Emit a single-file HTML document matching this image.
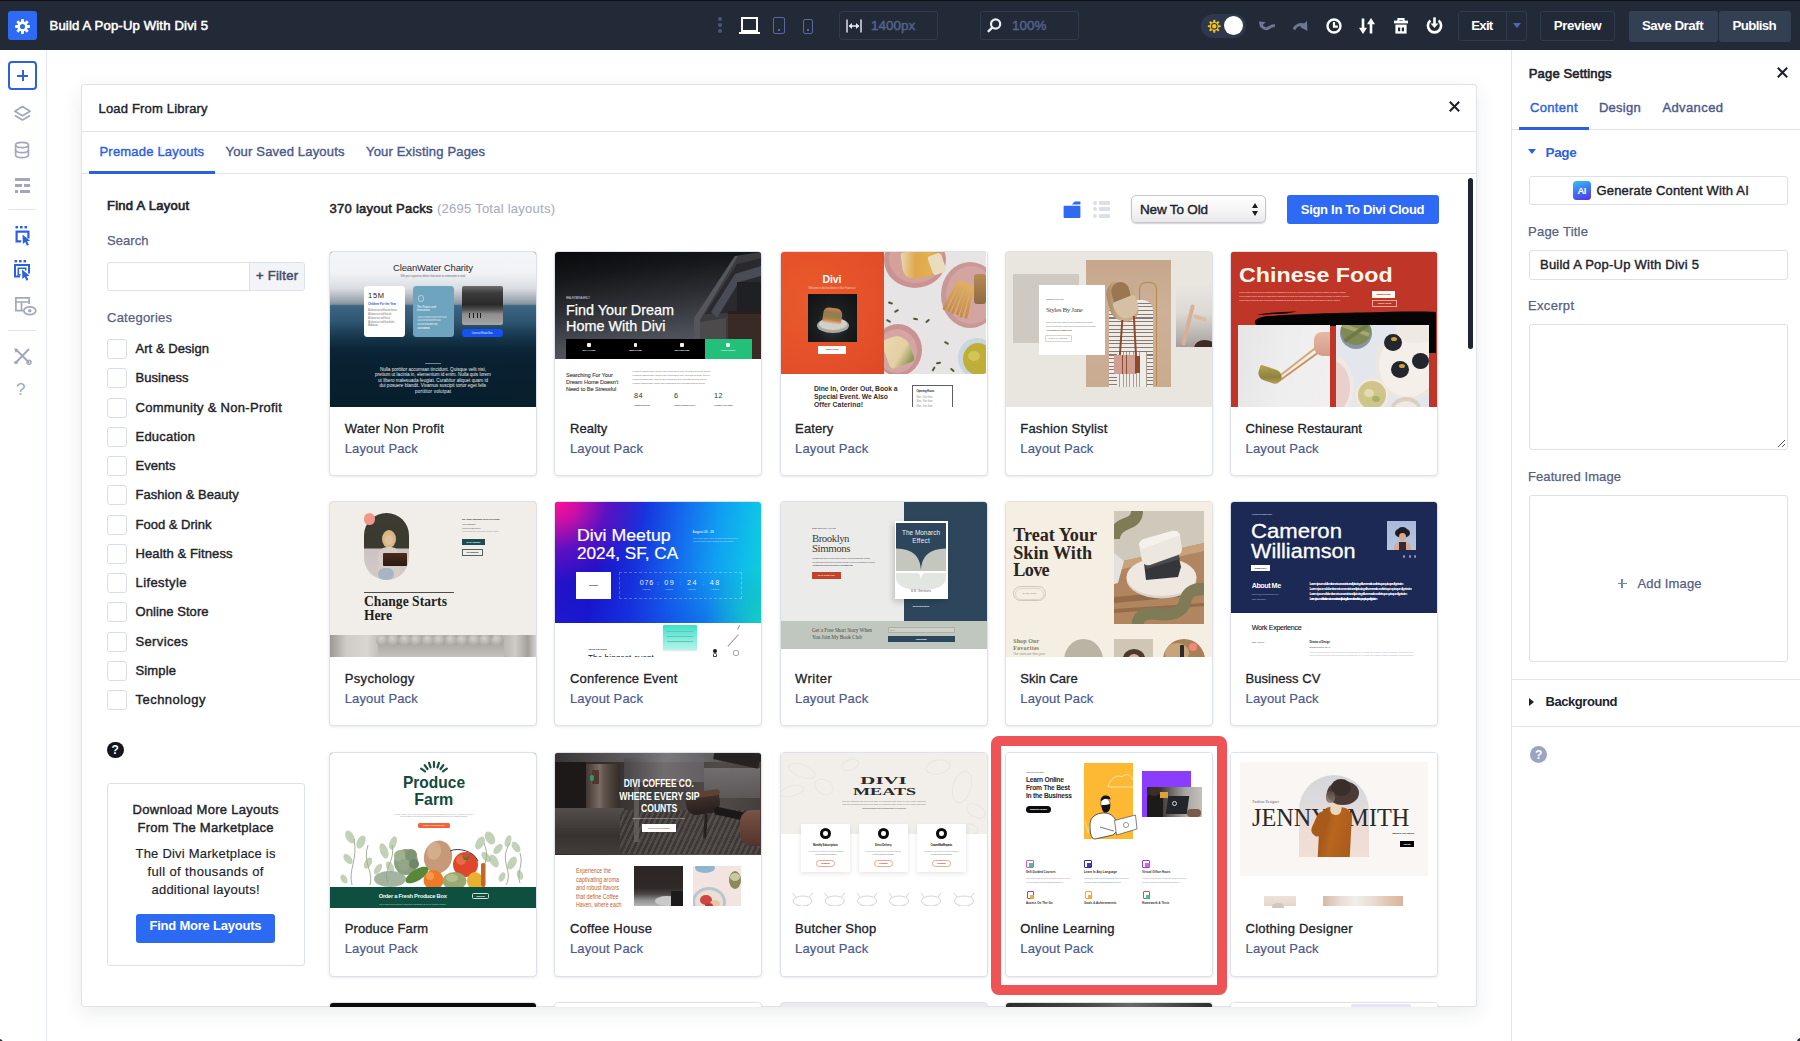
<!DOCTYPE html>
<html lang="en">
<head>
<meta charset="utf-8">
<title>Build A Pop-Up With Divi 5</title>
<style>
*{box-sizing:border-box;margin:0;padding:0}
html,body{width:1800px;height:1041px;overflow:hidden;background:#fff}
body{font-family:"Liberation Sans",sans-serif;font-size:13px;color:#20232b;position:relative;-webkit-font-smoothing:antialiased}
.abs{position:absolute}
.t{position:absolute;white-space:nowrap;line-height:16px;font-size:13px;letter-spacing:.25px;-webkit-text-stroke:.4px currentColor}
/* top bar */
#top{position:absolute;left:0;top:0;width:1800px;height:50px;background:#222a38;border-top:1px solid #0d1017}
#top .t{color:#fff;letter-spacing:0}
.tb{position:absolute;border:1px solid #303b4f;border-radius:3px}
/* sidebar */
#side{position:absolute;left:0;top:50px;width:47px;height:991px;background:#fff;border-right:1px solid #e3e6ec}
/* modal */
#modal{position:absolute;left:81px;top:84px;width:1396px;height:923px;background:#fff;border:1px solid #dfe2e8;border-radius:3px;box-shadow:0 6px 20px rgba(30,40,60,.09);overflow:hidden}
/* right panel */
#right{position:absolute;left:1511px;top:50px;width:289px;height:991px;background:#fff;border-left:1px solid #e1e4ea}
.card{position:absolute;width:208px;height:225px;background:#fff;border:1px solid #dde1e8;border-radius:4px;box-shadow:0 1px 3px rgba(30,40,60,.10);overflow:hidden}
.card .img{position:absolute;left:0;top:0;width:206px;height:155px;overflow:hidden}
.card .n{position:absolute;left:14.5px;top:168.8px;font-size:13px;line-height:16px;letter-spacing:.3px;color:#20232b;white-space:nowrap;-webkit-text-stroke:.3px currentColor}
.card .s{position:absolute;left:14.5px;top:188.8px;font-size:13px;line-height:16px;letter-spacing:.3px;color:#4c5a8c;white-space:nowrap;-webkit-text-stroke:.2px currentColor}
.m{position:absolute;white-space:nowrap}
.cb{position:absolute;left:107px;width:20px;height:20px;border:1px solid #d9dde5;border-radius:3px;background:#fff}
.cl{position:absolute;left:135px;font-size:13px;line-height:16px;letter-spacing:.3px;color:#20232b;white-space:nowrap;-webkit-text-stroke:.4px currentColor}
</style>
</head>
<body>
<!--TOP-->
<div id="top">
<div class="abs" style="left:8px;top:10px;width:29px;height:29px;background:#2f6af5;border-radius:3px"></div>
<svg class="abs" style="left:14px;top:16.500px" width="17" height="17" viewBox="0 0 24 24"><g fill="#fff"><circle cx="12" cy="12" r="7.2"/><g id="tt"><rect x="10" y="1.5" width="4" height="21" rx="1"/></g><rect x="10" y="1.5" width="4" height="21" rx="1" transform="rotate(45 12 12)"/><rect x="10" y="1.5" width="4" height="21" rx="1" transform="rotate(90 12 12)"/><rect x="10" y="1.5" width="4" height="21" rx="1" transform="rotate(135 12 12)"/></g><circle cx="12" cy="12" r="3.6" fill="#2f6af5"/></svg>
<div class="t" style="left:49.5px;top:17.0px;font-size:13.1px;letter-spacing:0.17px;color:#fff;-webkit-text-stroke:0.55px currentColor;">Build A Pop-Up With Divi 5</div>
<!-- dots -->
<div class="abs" style="left:718px;top:16px;width:4px;height:4px;border-radius:2px;background:#4c587a"></div>
<div class="abs" style="left:718px;top:22px;width:4px;height:4px;border-radius:2px;background:#4c587a"></div>
<div class="abs" style="left:718px;top:28px;width:4px;height:4px;border-radius:2px;background:#4c587a"></div>
<!-- desktop -->
<div class="abs" style="left:741px;top:16px;width:17px;height:15px;border:2px solid #fff"></div>
<div class="abs" style="left:739px;top:31px;width:21px;height:2px;background:#fff"></div>
<!-- tablet -->
<div class="abs" style="left:773px;top:16px;width:12px;height:17px;border:1.6px solid #5a6aa0;border-radius:2px"></div>
<div class="abs" style="left:778px;top:28px;width:2px;height:2px;background:#5a6aa0"></div>
<!-- phone -->
<div class="abs" style="left:803px;top:18px;width:10px;height:15px;border:1.6px solid #5a6aa0;border-radius:2px"></div>
<div class="abs" style="left:807px;top:28px;width:2px;height:2px;background:#5a6aa0"></div>
<!-- width box -->
<div class="tb" style="left:839px;top:10px;width:99px;height:29px"></div>
<svg class="abs" style="left:846px;top:17px" width="16" height="16" viewBox="0 0 16 16"><g stroke="#e8ecf5" stroke-width="1.4" fill="none"><path d="M1 1.5v13M15 1.5v13M3.5 8h9"/></g><path d="M2.6 8l3.4-3v6zM13.4 8l-3.4-3v6z" fill="#e8ecf5"/></svg>
<div class="t" style="left:871px;top:16.500px;color:#56648f;font-size:13.5px">1400px</div>
<!-- zoom box -->
<div class="tb" style="left:980px;top:10px;width:99px;height:29px"></div>
<svg class="abs" style="left:986px;top:16px" width="17" height="17" viewBox="0 0 17 17"><circle cx="9.6" cy="7" r="4.6" fill="none" stroke="#e8ecf5" stroke-width="2.2"/><path d="M6.2 10.6L2.6 14.2" stroke="#e8ecf5" stroke-width="2.4" stroke-linecap="round"/></svg>
<div class="t" style="left:1012px;top:16.500px;color:#56648f;font-size:13.5px">100%</div>
<!-- toggle -->
<div class="abs" style="left:1201px;top:13px;width:45px;height:24px;border-radius:12px;background:#2d384e"></div>
<svg class="abs" style="left:1206.500px;top:17.500px" width="14.500" height="14.500" viewBox="0 0 17 17"><g fill="#f2c21d"><circle cx="8.5" cy="8.5" r="5.2"/><g><rect x="7.3" y="1" width="2.4" height="15" rx=".6"/><rect x="7.3" y="1" width="2.4" height="15" rx=".6" transform="rotate(45 8.5 8.5)"/><rect x="7.3" y="1" width="2.4" height="15" rx=".6" transform="rotate(90 8.5 8.5)"/><rect x="7.3" y="1" width="2.4" height="15" rx=".6" transform="rotate(135 8.5 8.5)"/></g></g><circle cx="8.5" cy="8.5" r="3.3" fill="none" stroke="#2f394d" stroke-width="1.3"/></svg>
<div class="abs" style="left:1224px;top:15px;width:19px;height:19px;border-radius:10px;background:#fff"></div>
<!-- undo / redo -->
<svg class="abs" style="left:1257px;top:16.500px" width="20" height="18" viewBox="0 0 20 18"><path d="M4 6.500c1.800 4.400 5 5 7.600 3.400 2.200-1.400 3.600-2.600 6.400-2" fill="none" stroke="#6c7791" stroke-width="3"/><path d="M1.800 3.600l7 .4-5.600 5.600z" fill="#6c7791"/></svg>
<svg class="abs" style="left:1291px;top:16px" width="20" height="18" viewBox="0 0 20 18"><path d="M3 12.600c1.600-4.400 5.800-6.200 11.400-4.400" fill="none" stroke="#6c7791" stroke-width="3"/><path d="M13.400 3.600l5 8.600h-8.200z" fill="#6c7791" transform="rotate(28 14 9)"/></svg>
<!-- clock -->
<svg class="abs" style="left:1325px;top:16px" width="18" height="18" viewBox="0 0 18 18"><circle cx="9" cy="9" r="6.500" fill="none" stroke="#fff" stroke-width="2.400"/><path d="M9 5V9.600H12.800" fill="none" stroke="#fff" stroke-width="2.200"/></svg>
<!-- up/down arrows -->
<svg class="abs" style="left:1358px;top:16px" width="18" height="18" viewBox="0 0 18 18"><g stroke="#fff" stroke-width="2.600" fill="none"><path d="M5 1.400v11M13 16.600V6"/></g><path d="M1 10.800h8L5 17zM9 7.200h8L13 1z" fill="#fff"/></svg>
<!-- trash -->
<svg class="abs" style="left:1392px;top:16px" width="18" height="18" viewBox="0 0 18 18"><path d="M2 5h14" stroke="#fff" stroke-width="2.800" fill="none"/><path d="M6.400 4V2h5.200V4" stroke="#fff" stroke-width="2" fill="none"/><path d="M3.400 7.600h11.200v9H3.400z" fill="#fff"/><path d="M6 10.400h2.200v3.800H6zM9.800 10.400H12v3.800H9.800z" fill="#222a38"/></svg>
<!-- power -->
<svg class="abs" style="left:1425px;top:15px" width="19" height="19" viewBox="0 0 19 19"><path d="M5.400 4.600A6.600 6.600 0 1 0 13.600 4.600" fill="none" stroke="#fff" stroke-width="2.600"/><path d="M9.500 1.400v6.600" stroke="#fff" stroke-width="2.600"/><path d="M5.600 7.400h7.800L9.500 12z" fill="#fff"/></svg>
<!-- Exit -->
<div class="tb" style="left:1458px;top:10px;width:69px;height:30px"></div>
<div class="abs" style="left:1506px;top:11px;width:1px;height:28px;background:#303b4f"></div>
<div class="t" style="left:1471.3px;top:17.3px;font-size:13.3px;letter-spacing:-0.80px;color:#fff;font-weight:bold;-webkit-text-stroke:0;">Exit</div>
<div class="abs" style="left:1513px;top:22px;width:0;height:0;border-left:4px solid transparent;border-right:4px solid transparent;border-top:5px solid #5566b8"></div>
<!-- Preview -->
<div class="tb" style="left:1540px;top:10px;width:75px;height:30px"></div>
<div class="t" style="left:1553.7px;top:17.3px;font-size:13.3px;letter-spacing:-0.40px;color:#fff;font-weight:bold;-webkit-text-stroke:0;">Preview</div>
<!-- Save Draft / Publish -->
<div class="abs" style="left:1628.500px;top:10px;width:89px;height:30.500px;background:#334054;border-radius:3px"></div>
<div class="abs" style="left:1719px;top:10px;width:71.500px;height:30.500px;background:#334054;border-radius:3px"></div>
<div class="t" style="left:1641.9px;top:17.3px;font-size:13.3px;letter-spacing:-0.45px;color:#fff;font-weight:bold;-webkit-text-stroke:0;">Save Draft</div>
<div class="t" style="left:1732.6px;top:17.3px;font-size:13.3px;letter-spacing:-0.67px;color:#fff;font-weight:bold;-webkit-text-stroke:0;">Publish</div>
</div>
<!--SIDE-->
<div id="side">
<div class="abs" style="left:8px;top:11px;width:29px;height:29px;border:2px solid #2c60e4;border-radius:4px"></div>
<div class="abs" style="left:17px;top:24.5px;width:11px;height:2px;background:#2c60e4"></div>
<div class="abs" style="left:21.5px;top:20px;width:2px;height:11px;background:#2c60e4"></div>
<!-- layers -->
<svg class="abs" style="left:12px;top:54px" width="21" height="21" viewBox="0 0 21 21"><g fill="none" stroke="#a3a7bd" stroke-width="1.7" stroke-linejoin="round"><path d="M10.5 2.6l7.6 4.6-7.6 4.6-7.6-4.600z"/><path d="M2.9 11.4l7.600 4.600 7.600-4.600"/></g></svg>
<!-- database -->
<svg class="abs" style="left:13px;top:91px" width="18" height="18" viewBox="0 0 18 18"><g fill="none" stroke="#a3a7bd" stroke-width="1.7"><ellipse cx="9" cy="4" rx="6.400" ry="2.600"/><path d="M2.600 4v10c0 1.500 2.900 2.600 6.400 2.600s6.400-1.100 6.400-2.600V4"/><path d="M2.600 9c0 1.500 2.900 2.600 6.400 2.600s6.400-1.100 6.400-2.600"/></g></svg>
<!-- list -->
<div class="abs" style="left:15px;top:128px;width:15px;height:3px;background:#a3a7bd"></div>
<div class="abs" style="left:15px;top:134px;width:7px;height:3px;background:#a3a7bd"></div>
<div class="abs" style="left:24px;top:134px;width:6px;height:3px;background:#a3a7bd"></div>
<div class="abs" style="left:15px;top:140px;width:3px;height:3px;background:#a3a7bd"></div>
<div class="abs" style="left:20px;top:140px;width:10px;height:3px;background:#a3a7bd"></div>
<div class="abs" style="left:8px;top:159px;width:28px;height:1px;background:#e1e4ea"></div>
<!-- cursor select 1 -->
<svg class="abs" style="left:13px;top:175px" width="20" height="23" viewBox="0 0 20 23"><g fill="#2c60e4"><rect x="2.500" y="1" width="2.600" height="2.400"/><rect x="7" y="1" width="2.600" height="2.400"/><rect x="11.500" y="1" width="2.600" height="2.400"/><path d="M2.500 5.500h14v8h-2.200V7.700H4.700v7.600h3.500v2.200H2.500z"/><path d="M9.500 9.500l7.600 6.200-3 .5 1.800 3.600-1.900.9-1.800-3.700-2.300 2z"/></g></svg>
<!-- cursor select 2 -->
<svg class="abs" style="left:12px;top:209px" width="21" height="23" viewBox="0 0 21 23"><g fill="#2c60e4"><rect x="2.500" y="1" width="2.600" height="2.400"/><rect x="7" y="1" width="2.600" height="2.400"/><rect x="11.500" y="1" width="2.600" height="2.400"/><path d="M2 5h16v9.500h-2V7H4v9.500h4v2H2z"/><path d="M5.500 8.500h9v3h-1.600v-1.400H7.100v5H8.500v1.600h-3z"/><path d="M10 10.500l7.600 6.200-3 .5 1.800 3.600-1.900.9-1.800-3.700-2.300 2z"/></g></svg>
<!-- table eye -->
<svg class="abs" style="left:14px;top:246px" width="24" height="22" viewBox="0 0 24 22"><g fill="none" stroke="#a3a7bd" stroke-width="1.700"><path d="M9 14.600H1.900V1.900h13.200v6"/><path d="M1.900 6h13.200M7.500 6v8.600"/><ellipse cx="15.800" cy="14.800" rx="6" ry="3.900" fill="#fff"/></g><circle cx="15.800" cy="14.800" r="1.800" fill="#a3a7bd"/></svg>
<div class="abs" style="left:8px;top:280px;width:28px;height:1px;background:#e1e4ea"></div>
<!-- tools -->
<svg class="abs" style="left:13px;top:297px" width="19" height="18" viewBox="0 0 19 18"><g stroke="#a3a7bd" stroke-width="2" stroke-linecap="round" fill="none"><path d="M3 15.500L15.500 2.500"/><path d="M3 2.500L15.500 15"/></g><path d="M1.200 1.200l4 1.400-.6 2.200-2.200.6z" fill="#a3a7bd"/><circle cx="16" cy="15.200" r="2" fill="none" stroke="#a3a7bd" stroke-width="1.500"/><circle cx="3" cy="15.500" r="1.800" fill="#a3a7bd"/></svg>
<div class="t" style="left:16px;top:330px;font-size:17px;line-height:20px;color:#a3a7bd;-webkit-text-stroke:0">?</div>
</div>
<!--MODAL-->
<div id="modal"></div>
<div id="mc" class="abs" style="left:0;top:0;width:1477px;height:1007px;overflow:hidden">
<div class="t" style="left:98.5px;top:100.5px;font-size:13px;letter-spacing:0.18px;">Load From Library</div>
<svg class="abs" style="left:1448px;top:100px" width="13" height="13" viewBox="0 0 13 13"><path d="M1.800 1.800l9.400 9.400M11.200 1.800l-9.400 9.400" stroke="#1d2028" stroke-width="2" fill="none"/></svg>
<div class="abs" style="left:82px;top:131px;width:1394px;height:1px;background:#e1e4ea"></div>
<div class="t" style="left:99.5px;top:143.5px;font-size:13px;letter-spacing:0.19px;color:#2c60e4;">Premade Layouts</div>
<div class="t" style="left:225.5px;top:143.5px;font-size:13px;letter-spacing:0.18px;color:#4c5a8c;">Your Saved Layouts</div>
<div class="t" style="left:366.0px;top:143.5px;font-size:13px;letter-spacing:0.17px;color:#4c5a8c;">Your Existing Pages</div>
<div class="abs" style="left:82px;top:173px;width:1394px;height:1px;background:#e1e4ea"></div>
<div class="abs" style="left:89px;top:171px;width:126px;height:3px;background:#2c60e4"></div>
<div class="t" style="left:107.0px;top:197.5px;font-size:13px;letter-spacing:0.27px;-webkit-text-stroke:0.65px currentColor;">Find A Layout</div>
<div class="t" style="left:107.0px;top:232.5px;font-size:13px;letter-spacing:0.06px;color:#566083;-webkit-text-stroke:0.25px currentColor;">Search</div>
<div class="abs" style="left:107px;top:262px;width:198px;height:29px;border:1px solid #dde0e7;border-radius:3px;background:#fff"></div>
<div class="abs" style="left:249px;top:263px;width:55px;height:27px;border-left:1px solid #dde0e7;background:#f3f4f8;border-radius:0 2px 2px 0"></div>
<div class="t" style="left:256.0px;top:268.3px;font-size:13px;letter-spacing:0.27px;color:#434c6c;-webkit-text-stroke:0.5px currentColor;">+ Filter</div>
<div class="t" style="left:107.0px;top:309.5px;font-size:13px;letter-spacing:0.24px;color:#566083;-webkit-text-stroke:0.25px currentColor;">Categories</div>
<div class="cb" style="top:339.0px"></div>
<div class="t" style="left:135.5px;top:341.0px;font-size:13px;letter-spacing:0.05px;">Art &amp; Design</div>
<div class="cb" style="top:368.3px"></div>
<div class="t" style="left:135.5px;top:370.3px;font-size:13px;letter-spacing:0.04px;">Business</div>
<div class="cb" style="top:397.5px"></div>
<div class="t" style="left:135.5px;top:399.5px;font-size:13px;letter-spacing:0.29px;">Community &amp; Non-Profit</div>
<div class="cb" style="top:426.8px"></div>
<div class="t" style="left:135.5px;top:428.8px;font-size:13px;letter-spacing:0.21px;">Education</div>
<div class="cb" style="top:456.1px"></div>
<div class="t" style="left:135.5px;top:458.1px;font-size:13px;letter-spacing:0.05px;">Events</div>
<div class="cb" style="top:485.4px"></div>
<div class="t" style="left:135.5px;top:487.4px;font-size:13px;letter-spacing:0.04px;">Fashion &amp; Beauty</div>
<div class="cb" style="top:514.6px"></div>
<div class="t" style="left:135.5px;top:516.6px;font-size:13px;letter-spacing:0.01px;">Food &amp; Drink</div>
<div class="cb" style="top:543.9px"></div>
<div class="t" style="left:135.5px;top:545.9px;font-size:13px;letter-spacing:0.11px;">Health &amp; Fitness</div>
<div class="cb" style="top:573.2px"></div>
<div class="t" style="left:135.5px;top:575.2px;font-size:13px;letter-spacing:0.41px;">Lifestyle</div>
<div class="cb" style="top:602.4px"></div>
<div class="t" style="left:135.5px;top:604.4px;font-size:13px;letter-spacing:0.07px;">Online Store</div>
<div class="cb" style="top:631.7px"></div>
<div class="t" style="left:135.5px;top:633.7px;font-size:13px;letter-spacing:0.36px;">Services</div>
<div class="cb" style="top:661.0px"></div>
<div class="t" style="left:135.5px;top:663.0px;font-size:13px;letter-spacing:0.15px;">Simple</div>
<div class="cb" style="top:690.2px"></div>
<div class="t" style="left:135.5px;top:692.2px;font-size:13px;letter-spacing:0.47px;">Technology</div>
<div class="abs" style="left:107px;top:741.5px;width:16.500px;height:16.500px;border-radius:9px;background:#14161c"></div>
<div class="t" style="left:111.5px;top:741.8px;font-size:12px;letter-spacing:0.00px;color:#fff;font-weight:bold;-webkit-text-stroke:0;">?</div>
<div class="abs" style="left:107px;top:783px;width:198px;height:183px;border:1px solid #dde0e7;border-radius:3px"></div>
<div class="t" style="left:132.5px;top:801.5px;font-size:13px;letter-spacing:0.29px;">Download More Layouts</div>
<div class="t" style="left:137.5px;top:819.5px;font-size:13px;letter-spacing:0.29px;">From The Marketplace</div>
<div class="t" style="left:135.5px;top:845.5px;font-size:13px;letter-spacing:0.22px;-webkit-text-stroke:0.15px currentColor;">The Divi Marketplace is</div>
<div class="t" style="left:147.5px;top:863.5px;font-size:13px;letter-spacing:0.36px;-webkit-text-stroke:0.15px currentColor;">full of thousands of</div>
<div class="t" style="left:151.5px;top:881.5px;font-size:13px;letter-spacing:0.22px;-webkit-text-stroke:0.15px currentColor;">additional layouts!</div>
<div class="abs" style="left:136px;top:914px;width:139px;height:29px;border-radius:3px;background:#2c6af3"></div>
<div class="t" style="left:149.5px;top:918.0px;font-size:13px;letter-spacing:-0.22px;color:#fff;font-weight:bold;-webkit-text-stroke:0;">Find More Layouts</div>
<div class="t" style="left:329.5px;top:201.0px;font-size:13px;letter-spacing:0.27px;-webkit-text-stroke:0.55px currentColor;">370 layout Packs</div>
<div class="t" style="left:437.0px;top:201.0px;font-size:13px;letter-spacing:0.25px;color:#a9adc0;-webkit-text-stroke:0.1px currentColor;">(2695 Total layouts)</div>
<svg class="abs" style="left:1062.500px;top:200.500px" width="18" height="18" viewBox="0 0 18 18"><path d="M.6 3.600h8.200l2.800-3h5.800v3H.6z" fill="#2f6af0"/><rect x=".6" y="4.700" width="16.800" height="12.300" rx="1" fill="#2f6af0"/></svg>
<div class="abs" style="left:1092.500px;top:201.0px;width:4px;height:4px;border-radius:2px;background:#dcdfe9"></div>
<div class="abs" style="left:1099px;top:201.0px;width:10.700px;height:4px;border-radius:1px;background:#dcdfe9"></div>
<div class="abs" style="left:1092.500px;top:207.3px;width:4px;height:4px;border-radius:2px;background:#dcdfe9"></div>
<div class="abs" style="left:1099px;top:207.3px;width:10.700px;height:4px;border-radius:1px;background:#dcdfe9"></div>
<div class="abs" style="left:1092.500px;top:213.6px;width:4px;height:4px;border-radius:2px;background:#dcdfe9"></div>
<div class="abs" style="left:1099px;top:213.6px;width:10.700px;height:4px;border-radius:1px;background:#dcdfe9"></div>
<div class="abs" style="left:1130.700px;top:194.800px;width:135px;height:28.700px;border:1px solid #c6c7cc;border-radius:5px;background:linear-gradient(180deg,#fff 0%,#f4f4f5 60%,#e9e9eb 100%);box-shadow:0 1px 1.500px rgba(0,0,0,.18)"></div>
<div class="t" style="left:1140.0px;top:201.7px;font-size:13.5px;letter-spacing:-0.17px;">New To Old</div>
<div class="abs" style="left:1252.400px;top:203px;width:0;height:0;border-left:3.500px solid transparent;border-right:3.500px solid transparent;border-bottom:5px solid #1d1d1f"></div>
<div class="abs" style="left:1252.400px;top:210.500px;width:0;height:0;border-left:3.500px solid transparent;border-right:3.500px solid transparent;border-top:5px solid #1d1d1f"></div>
<div class="abs" style="left:1287px;top:194.800px;width:151.700px;height:29px;border-radius:3px;background:#2f6af5"></div>
<div class="t" style="left:1300.8px;top:201.8px;font-size:13px;letter-spacing:-0.30px;color:#fff;font-weight:bold;-webkit-text-stroke:0;">Sign In To Divi Cloud</div>
<div class="abs" style="left:1468px;top:178px;width:5px;height:171px;border-radius:2.500px;background:#1d2535"></div>
<!--GRIDCARDS-->
<div class="card" style="left:329.2px;top:250.9px"><div class="img" style="background:#071e2d"><div class="abs" style="left:-0.2px;top:-0.1px;width:206px;height:155px"><div class="abs" style="left:-1.0px;top:-1.0px;width:209.0px;height:156.0px;background:linear-gradient(180deg,#f3f5f8 0%,#f1f3f6 14%,#d9dde2 24%,#8e9aa3 33.500%,#7d8d98 34.200%,#3d6684 35%,#2f5672 45%,#17374d 55%,#0b2538 63%,#08202f 75%,#071e2d 100%);"></div><div class="m" style="left:63.0px;top:9.8px;font-size:9.5px;line-height:11.4px;letter-spacing:-0.15px;color:#2b2b2f;">CleanWater Charity</div><div class="m" style="left:70.5px;top:23.4px;font-size:2.6px;line-height:3.1px;letter-spacing:-0.15px;color:#777;">With your support we deliver clean water to communities in need</div><div class="abs" style="left:33.5px;top:34.0px;width:41.5px;height:51.0px;background:#fff;border-radius:3.500px"></div><div class="m" style="left:38.0px;top:39.0px;font-size:7.5px;line-height:9px;letter-spacing:0.71px;color:#222;">15M</div><div class="m" style="left:38.0px;top:51.3px;font-size:2.8px;line-height:3.4px;letter-spacing:-0.01px;color:#2457d6;font-weight:bold;">Children For the Year</div><div class="m" style="left:38.0px;top:57.5px;font-size:2.6px;line-height:3.1px;letter-spacing:-0.25px;color:#888;">All about our staff that do the wo</div><div class="m" style="left:38.0px;top:61.2px;font-size:2.6px;line-height:3.1px;letter-spacing:-0.21px;color:#888;">All about our staff that do </div><div class="m" style="left:38.0px;top:65.0px;font-size:2.6px;line-height:3.1px;letter-spacing:-0.22px;color:#888;">All about our staff that d</div><div class="m" style="left:38.0px;top:68.9px;font-size:2.6px;line-height:3.1px;letter-spacing:-0.22px;color:#888;">All about our staff that do the </div><div class="m" style="left:38.0px;top:72.7px;font-size:2.6px;line-height:3.1px;letter-spacing:-0.34px;color:#888;">All about ou</div><div class="abs" style="left:82.5px;top:34.0px;width:41.5px;height:51.0px;background:#6fa4bf;border-radius:3.500px"></div><div class="abs" style="left:87.8px;top:43.4px;width:6.4px;height:7.2px;background:transparent;border-radius:50%;border:1px solid #a9cbdc"></div><div class="m" style="left:87.0px;top:53.8px;font-size:2.8px;line-height:3.4px;letter-spacing:-0.09px;color:#d5e6ee;font-weight:bold;">The Future and</div><div class="m" style="left:87.0px;top:57.5px;font-size:2.8px;line-height:3.4px;letter-spacing:-0.13px;color:#d5e6ee;font-weight:bold;">Innovation</div><div class="m" style="left:87.0px;top:64.0px;font-size:2.6px;line-height:3.1px;letter-spacing:-0.35px;color:#c3dbe6;overflow:hidden;width:30px">Clean a number of water from a lake</div><div class="m" style="left:87.0px;top:67.7px;font-size:2.6px;line-height:3.1px;letter-spacing:-0.53px;color:#c3dbe6;overflow:hidden;width:24px">Clean a number of water from a lake</div><div class="m" style="left:87.0px;top:71.4px;font-size:2.6px;line-height:3.1px;letter-spacing:-0.62px;color:#c3dbe6;overflow:hidden;width:21px">Clean a number of water from a lake</div><div class="m" style="left:87.0px;top:75.0px;font-size:2.6px;line-height:3.1px;letter-spacing:-0.85px;color:#c3dbe6;overflow:hidden;width:13px">Clean a number of water from a lake</div><div class="abs" style="left:131.6px;top:34.0px;width:41.2px;height:39.0px;background:linear-gradient(180deg,#6e6e6e 0%,#3c3c3c 18%,#2a2a2a 48%,#4f4f4f 60%,#8d8d8d 72%,#a5a5a5 100%);border-radius:2px"></div><div class="abs" style="left:139.0px;top:61.0px;width:1.2px;height:5.0px;background:#1e1e1e;"></div><div class="abs" style="left:143.0px;top:61.0px;width:1.2px;height:5.0px;background:#1e1e1e;"></div><div class="abs" style="left:146.5px;top:61.0px;width:1.2px;height:5.0px;background:#1e1e1e;"></div><div class="abs" style="left:150.0px;top:61.0px;width:1.2px;height:5.0px;background:#1e1e1e;"></div><div class="abs" style="left:131.6px;top:77.3px;width:41.2px;height:8.2px;background:#1453f2;border-radius:3.500px"></div><div class="m" style="left:141.7px;top:79.9px;font-size:2.6px;line-height:3.1px;letter-spacing:-0.28px;color:#cfe0ff;">Learn our Mission Now</div><div class="abs" style="left:94.5px;top:111.2px;width:16.5px;height:0.8px;background:#6f8392;"></div><div class="m" style="left:50.0px;top:114.8px;font-size:4.6px;line-height:5.5px;letter-spacing:-0.01px;color:#e8eef3;">Nulla porttitor accumsan tincidunt. Quisque velit nisi,</div><div class="m" style="left:45.0px;top:120.4px;font-size:4.6px;line-height:5.5px;letter-spacing:-0.01px;color:#e8eef3;">pretium ut lacinia in, elementum id enim. Nulla quis lorem</div><div class="m" style="left:48.0px;top:126.0px;font-size:4.6px;line-height:5.5px;letter-spacing:0.02px;color:#e8eef3;">ut libero malesuada feugiat. Curabitur aliquet quam id</div><div class="m" style="left:49.5px;top:131.6px;font-size:4.6px;line-height:5.5px;letter-spacing:-0.01px;color:#e8eef3;">dui posuere blandit. Vivamus suscipit tortor eget felis</div><div class="m" style="left:85.0px;top:137.2px;font-size:4.6px;line-height:5.5px;letter-spacing:0.18px;color:#e8eef3;">porttitor volutpat</div></div></div><div class="n" style="letter-spacing:0.23px">Water Non Profit</div><div class="s" style="letter-spacing:0.15px">Layout Pack</div></div>
<div class="card" style="left:554.4px;top:250.9px"><div class="img" style="background:#fff"><div class="abs" style="left:-0.4px;top:-0.1px;width:206px;height:155px"><div class="abs" style="left:-1.0px;top:-1.0px;width:209.0px;height:108.0px;background:linear-gradient(172deg,#09090b 0%,#16171a 22%,#2c2e33 45%,#4b4e55 72%,#5f636b 100%);"></div><svg class="abs" style="left:0;top:0" width="206" height="107" viewBox="0 0 206 107"><path d="M139 107V66L180 4l26-4v107z" fill="#3b3b40"/><path d="M139 66L180 4l3 0-38 64v39h-6z" fill="#55565c"/><path d="M150 62l32-50 24-6v54z" fill="#2a2a2e"/><path d="M156 60l24-38 26-8v10l-22 6-22 36z" fill="#4a4c55"/><path d="M182 30h24v30h-24z" fill="#1f2024"/><path d="M173 59h33v48h-33z" fill="#3a2a26"/><path d="M173 59h33v3h-33z" fill="#2a1e1b"/><path d="M145 70l26-4v41h-26z" fill="#4c4a4a"/></svg><div class="m" style="left:11.0px;top:45.5px;font-size:2.6px;line-height:3.1px;letter-spacing:-0.28px;color:#d5d5d8;">REAL ESTATE AGENCY</div><div class="m" style="left:11.0px;top:50.6px;font-size:14.4px;line-height:17.3px;letter-spacing:-0.00px;color:#fff;-webkit-text-stroke:.25px #fff">Find Your Dream</div><div class="m" style="left:11.0px;top:65.9px;font-size:14.4px;line-height:17.3px;letter-spacing:0.02px;color:#fff;-webkit-text-stroke:.25px #fff">Home With Divi</div><div class="abs" style="left:11.0px;top:87.0px;width:139.0px;height:20.0px;background:#000;"></div><div class="abs" style="left:150.0px;top:87.0px;width:47.0px;height:20.0px;background:#22c07b;"></div><div class="abs" style="left:32.2px;top:91.5px;width:3.6px;height:3.4px;background:#f2f2f2;border-radius:1px"></div><div class="m" style="left:27.5px;top:98.0px;font-size:2.4px;line-height:2.9px;letter-spacing:-0.23px;color:#e6e6e6;font-weight:bold;">BUY A HOME</div><div class="abs" style="left:78.7px;top:91.5px;width:3.6px;height:3.4px;background:#f2f2f2;border-radius:1px"></div><div class="m" style="left:74.0px;top:98.0px;font-size:2.4px;line-height:2.9px;letter-spacing:-0.36px;color:#e6e6e6;font-weight:bold;">RENT A HOME</div><div class="abs" style="left:125.2px;top:91.5px;width:3.6px;height:3.4px;background:#f2f2f2;border-radius:1px"></div><div class="m" style="left:119.5px;top:98.0px;font-size:2.4px;line-height:2.9px;letter-spacing:-0.43px;color:#e6e6e6;font-weight:bold;">LIST YOUR HOME</div><div class="abs" style="left:171.2px;top:91.5px;width:3.6px;height:3.4px;background:#f2f2f2;border-radius:1px"></div><div class="m" style="left:165.5px;top:98.0px;font-size:2.4px;line-height:2.9px;letter-spacing:-0.26px;color:#e6e6e6;font-weight:bold;">OPEN HOUSES</div><div class="m" style="left:11.0px;top:120.0px;font-size:5.6px;line-height:6.7px;letter-spacing:-0.06px;color:#4a4a4a;-webkit-text-stroke:.15px #4a4a4a">Searching For Your</div><div class="m" style="left:11.0px;top:127.0px;font-size:5.6px;line-height:6.7px;letter-spacing:-0.07px;color:#4a4a4a;-webkit-text-stroke:.15px #4a4a4a">Dream Home Doesn't</div><div class="m" style="left:11.0px;top:134.0px;font-size:5.6px;line-height:6.7px;letter-spacing:-0.05px;color:#4a4a4a;-webkit-text-stroke:.15px #4a4a4a">Need to Be Stressful</div><div class="m" style="left:77.0px;top:119.5px;font-size:2.4px;line-height:2.9px;letter-spacing:-0.04px;color:#777;overflow:hidden;width:79px">Vivamus magna justo, lacinia eget consectetur sed, convallis at tellus. Donec</div><div class="m" style="left:77.0px;top:123.3px;font-size:2.4px;line-height:2.9px;letter-spacing:-0.05px;color:#777;overflow:hidden;width:78px">Vivamus magna justo, lacinia eget consectetur sed, convallis at tellus. Donec</div><div class="m" style="left:77.0px;top:127.0px;font-size:2.4px;line-height:2.9px;letter-spacing:-0.09px;color:#777;overflow:hidden;width:75px">Vivamus magna justo, lacinia eget consectetur sed, convallis at tellus. Donec</div><div class="m" style="left:77.0px;top:130.8px;font-size:2.4px;line-height:2.9px;letter-spacing:-0.11px;color:#777;overflow:hidden;width:73px">Vivamus magna justo, lacinia eget consectetur sed, convallis at tellus. Donec</div><div class="m" style="left:79.0px;top:140.2px;font-size:7.3px;line-height:8.8px;letter-spacing:0.38px;color:#333;">84</div><div class="m" style="left:119.0px;top:140.2px;font-size:7.3px;line-height:8.8px;letter-spacing:0.00px;color:#333;">6</div><div class="m" style="left:159.0px;top:140.2px;font-size:7.3px;line-height:8.8px;letter-spacing:0.38px;color:#333;">12</div><div class="m" style="left:79.0px;top:152.3px;font-size:2.2px;line-height:2.6px;letter-spacing:-0.29px;color:#555;font-weight:bold;">HOMES FOR SALE</div><div class="m" style="left:119.0px;top:152.3px;font-size:2.2px;line-height:2.6px;letter-spacing:-0.14px;color:#555;font-weight:bold;">OPEN HOUSES TODAY</div><div class="m" style="left:159.0px;top:152.3px;font-size:2.2px;line-height:2.6px;letter-spacing:-0.07px;color:#555;font-weight:bold;">HOMES FOR RENT</div></div></div><div class="n" style="letter-spacing:0.11px">Realty</div><div class="s" style="letter-spacing:0.15px">Layout Pack</div></div>
<div class="card" style="left:779.6px;top:250.9px"><div class="img" style="background:#fff"><div class="abs" style="left:-0.6px;top:-0.1px;width:206px;height:155px"><div class="abs" style="left:103.0px;top:0.0px;width:103.0px;height:122.0px;background:#e7e4e5;"></div><div class="abs" style="left:0.0px;top:0.0px;width:103.5px;height:122.0px;background:radial-gradient(ellipse at 30% 40%,#ea5a2c 0%,#e5512a 55%,#dc4a25 100%);"></div><div class="abs" style="left:103.500px;top:0;width:102.500px;height:122px;overflow:hidden;background:#e7e4e5"><div class="abs" style="left:0.5px;top:-20.0px;width:62.0px;height:56.0px;background:#c99391;border-radius:50%;"></div><div class="abs" style="left:5.5px;top:-17.0px;width:54.0px;height:48.0px;background:#d4a19d;border-radius:50%;"></div><div class="abs" style="left:18.5px;top:-2.0px;width:40.0px;height:27.0px;background:linear-gradient(100deg,#e9d9b5 0%,#dfa84a 35%,#e2b052 70%,#c98d3c 100%);border-radius:3px 3px 14px 10px;transform:rotate(-8deg)"></div><div class="abs" style="left:46.5px;top:2.0px;width:14.0px;height:20.0px;background:#e9dcc0;border-radius:3px;transform:rotate(-20deg)"></div><div class="abs" style="left:57.5px;top:10.0px;width:58.0px;height:66.0px;background:#c79896;border-radius:50%;"></div><div class="abs" style="left:62.5px;top:14.0px;width:50.0px;height:58.0px;background:#d3a5a2;border-radius:50%;"></div><div class="abs" style="left:66.5px;top:26.0px;width:2.6px;height:34.0px;background:linear-gradient(180deg,#e0b25e,#c78c3a);border-radius:1.500px;transform:rotate(28deg)"></div><div class="abs" style="left:70.0px;top:27.5px;width:2.6px;height:34.0px;background:linear-gradient(180deg,#e0b25e,#c78c3a);border-radius:1.500px;transform:rotate(25deg)"></div><div class="abs" style="left:73.5px;top:29.0px;width:2.6px;height:34.0px;background:linear-gradient(180deg,#e0b25e,#c78c3a);border-radius:1.500px;transform:rotate(22deg)"></div><div class="abs" style="left:77.0px;top:30.5px;width:2.6px;height:34.0px;background:linear-gradient(180deg,#e0b25e,#c78c3a);border-radius:1.500px;transform:rotate(19deg)"></div><div class="abs" style="left:80.5px;top:32.0px;width:2.6px;height:34.0px;background:linear-gradient(180deg,#e0b25e,#c78c3a);border-radius:1.500px;transform:rotate(16deg)"></div><div class="abs" style="left:84.0px;top:33.5px;width:2.6px;height:34.0px;background:linear-gradient(180deg,#e0b25e,#c78c3a);border-radius:1.500px;transform:rotate(13deg)"></div><div class="abs" style="left:90.5px;top:22.0px;width:12.0px;height:30.0px;background:linear-gradient(180deg,#b98b55,#8f6a45);border-radius:3px"></div><div class="abs" style="left:-9.5px;top:72.0px;width:48.0px;height:52.0px;background:#c99391;border-radius:50%;"></div><div class="abs" style="left:-6.5px;top:77.0px;width:40.0px;height:44.0px;background:#d4a5a2;border-radius:50%;"></div><div class="abs" style="left:1.5px;top:84.0px;width:26.0px;height:30.0px;background:linear-gradient(140deg,#ead9b3,#e3cfa2 60%,#8f9a58 90%);border-radius:2px 14px 4px 4px;transform:rotate(-20deg)"></div><div class="abs" style="left:74.5px;top:86.0px;width:38.0px;height:40.0px;background:#c9d6dc;border-radius:50%;"></div><div class="abs" style="left:79.5px;top:91.0px;width:30.0px;height:32.0px;background:#bfae3a;border-radius:50%;"></div><div class="abs" style="left:84.5px;top:99.0px;width:12.0px;height:10.0px;background:#d4c457;border-radius:50%;"></div><div class="abs" style="left:4.5px;top:50.0px;width:5.0px;height:1.8px;background:#4f5a3a;transform:rotate(20deg);border-radius:1px"></div><div class="abs" style="left:10.5px;top:58.0px;width:5.0px;height:1.8px;background:#4f5a3a;transform:rotate(-30deg);border-radius:1px"></div><div class="abs" style="left:29.5px;top:66.0px;width:5.0px;height:1.8px;background:#4f5a3a;transform:rotate(10deg);border-radius:1px"></div><div class="abs" style="left:41.5px;top:68.0px;width:5.0px;height:1.8px;background:#4f5a3a;transform:rotate(-40deg);border-radius:1px"></div><div class="abs" style="left:60.5px;top:90.0px;width:5.0px;height:1.8px;background:#4f5a3a;transform:rotate(30deg);border-radius:1px"></div><div class="abs" style="left:52.5px;top:110.0px;width:5.0px;height:1.8px;background:#4f5a3a;transform:rotate(-10deg);border-radius:1px"></div><div class="abs" style="left:66.5px;top:117.0px;width:5.0px;height:1.8px;background:#4f5a3a;transform:rotate(40deg);border-radius:1px"></div><div class="abs" style="left:47.5px;top:116.0px;width:5.0px;height:1.8px;background:#4f5a3a;transform:rotate(-60deg);border-radius:1px"></div><div class="abs" style="left:2.5px;top:68.0px;width:5.0px;height:1.8px;background:#4f5a3a;transform:rotate(30deg);border-radius:1px"></div></div><div class="m" style="left:42.5px;top:21.1px;font-size:10.5px;line-height:12.6px;letter-spacing:-0.09px;color:#fff;font-weight:bold;">Divi</div><div class="m" style="left:28.5px;top:35.2px;font-size:2.6px;line-height:3.1px;letter-spacing:-0.09px;color:#f8cdb9;">Welcome to the best bistro in San Francisco</div><div class="abs" style="left:27.7px;top:42.0px;width:49.3px;height:48.7px;background:radial-gradient(ellipse at 50% 62%,#3a3c3c 0%,#1b1d1f 45%,#0f1113 100%);"></div><div class="abs" style="left:36.5px;top:66.5px;width:32.0px;height:15.0px;background:#a9aaa3;border-radius:50%;"></div><div class="abs" style="left:38.5px;top:66.5px;width:28.0px;height:12.0px;background:#d1d1c9;border-radius:50%;"></div><div class="abs" style="left:43.0px;top:56.0px;width:19.0px;height:16.0px;background:linear-gradient(180deg,#b98d5c 0%,#a3744a 30%,#7f8a48 55%,#c77a52 75%,#dccfae 100%);border-radius:5px 6px 3px 3px;transform:rotate(8deg)"></div><div class="abs" style="left:38.0px;top:94.7px;width:28.0px;height:7.3px;background:#fff;"></div><div class="m" style="left:45.0px;top:97.0px;font-size:2.4px;line-height:2.9px;letter-spacing:-0.40px;color:#c4582f;font-weight:bold;">ORDER ONLINE</div><div class="m" style="left:34.0px;top:132.9px;font-size:6.8px;line-height:8.2px;letter-spacing:-0.06px;color:#303030;font-weight:bold;">Dine In, Order Out, Book a</div><div class="m" style="left:34.0px;top:140.9px;font-size:6.8px;line-height:8.2px;letter-spacing:-0.02px;color:#303030;font-weight:bold;">Special Event. We Also</div><div class="m" style="left:34.0px;top:148.9px;font-size:6.8px;line-height:8.2px;letter-spacing:0.07px;color:#303030;font-weight:bold;">Offer Catering!</div><div class="abs" style="left:132.0px;top:133.0px;width:41.0px;height:30.0px;background:#fff;border:1px solid #5a5f6a"></div><div class="m" style="left:136.5px;top:137.8px;font-size:2.8px;line-height:3.4px;letter-spacing:-0.19px;color:#333;font-weight:bold;">Opening Hours</div><div class="m" style="left:136.5px;top:143.9px;font-size:2.6px;line-height:3.1px;letter-spacing:-0.19px;color:#999;">Mon - Sun: 9am</div><div class="m" style="left:136.5px;top:148.5px;font-size:2.6px;line-height:3.1px;letter-spacing:-0.19px;color:#999;">Mon - Sun: 9am</div><div class="m" style="left:136.5px;top:153.1px;font-size:2.6px;line-height:3.1px;letter-spacing:-0.19px;color:#999;">Mon - Sun: 9am</div></div></div><div class="n" style="letter-spacing:0.13px">Eatery</div><div class="s" style="letter-spacing:0.15px">Layout Pack</div></div>
<div class="card" style="left:1004.8px;top:250.9px"><div class="img" style="background:#e9e5df"><div class="abs" style="left:-0.8px;top:-0.1px;width:206px;height:155px"><div class="abs" style="left:-1.0px;top:-1.0px;width:209.0px;height:156.0px;background:#e9e5df;"></div><div class="abs" style="left:8.0px;top:22.5px;width:66.0px;height:69.0px;background:#cecac2;"></div><div class="abs" style="left:81.0px;top:8.0px;width:84.6px;height:127.0px;background:linear-gradient(180deg,#c6a78d 0%,#cdb097 40%,#c9ab92 100%);"></div><div class="abs" style="left:134.0px;top:30.5px;width:18.0px;height:104.0px;background:transparent;border:1.6px solid #b48a4a;border-bottom:none;border-radius:7px 7px 0 0"></div><div class="abs" style="left:104.0px;top:48.0px;width:44.0px;height:87.0px;background:repeating-linear-gradient(180deg,#efebe6 0,#efebe6 2.600px,#857a76 2.600px,#857a76 3.700px);border-radius:12px 10px 0 0"></div><div class="abs" style="left:112.0px;top:100.0px;width:30.0px;height:35.0px;background:repeating-linear-gradient(90deg,#f0ede8 0,#f0ede8 2.400px,#a5a08f 2.400px,#a5a08f 3.300px);"></div><div class="abs" style="left:103.0px;top:28.0px;width:28.0px;height:42.0px;background:linear-gradient(100deg,#a4825c 0%,#cdb08e 45%,#c6a684 100%);border-radius:14px 14px 10px 16px;transform:rotate(-14deg)"></div><div class="abs" style="left:107.0px;top:30.0px;width:18.0px;height:24.0px;background:#9a7752;border-radius:10px 10px 6px 8px;transform:rotate(-14deg)"></div><div class="abs" style="left:110.0px;top:46.0px;width:24.0px;height:20.0px;background:#d6bfa3;border-radius:3px 3px 12px 12px;transform:rotate(-22deg)"></div><div class="abs" style="left:115.0px;top:68.0px;width:1.8px;height:38.0px;background:#8b4a2c;transform:rotate(4deg)"></div><div class="abs" style="left:129.0px;top:64.0px;width:1.8px;height:42.0px;background:#8b4a2c;transform:rotate(-3deg)"></div><div class="abs" style="left:109.0px;top:103.5px;width:22.0px;height:18.5px;background:repeating-linear-gradient(90deg,#cf9f94 0,#cf9f94 3.600px,#8d4f3a 3.600px,#8d4f3a 4.300px);border-radius:1px"></div><div class="abs" style="left:130.0px;top:104.0px;width:4.5px;height:17.0px;background:#8b4a2c;"></div><div class="abs" style="left:171px;top:34.500px;width:36px;height:60.500px;overflow:hidden;background:linear-gradient(180deg,#e8e4df 0%,#dcd8d3 45%,#b6b1ac 85%,#a39e99 100%)"><div class="abs" style="left:10.0px;top:17.5px;width:3.5px;height:42.0px;background:#d6b197;transform:rotate(14deg);border-radius:2px"></div><div class="abs" style="left:17.0px;top:29.5px;width:14.0px;height:3.5px;background:#dcbba3;transform:rotate(18deg);border-radius:2px"></div><div class="abs" style="left:18.0px;top:53.5px;width:22.0px;height:16.0px;background:#3b2d26;border-radius:50%;"></div></div><div class="abs" style="left:33.7px;top:33.7px;width:66.0px;height:69.7px;background:#fff;"></div><div class="m" style="left:41.0px;top:47.5px;font-size:2.4px;line-height:2.9px;letter-spacing:-0.36px;color:#777;">PERSONAL STYLIST</div><div class="m" style="left:41.0px;top:53.8px;font-size:7px;line-height:8.4px;letter-spacing:-0.35px;color:#4a4a4a;font-family:'Liberation Serif',serif;">Styles By Jane</div><div class="m" style="left:41.0px;top:69.5px;font-size:2.5px;line-height:3px;letter-spacing:-0.15px;color:#888;overflow:hidden;width:47px">Proin eget tortor risus. Donec sollicitudin molestie</div><div class="m" style="left:41.0px;top:73.3px;font-size:2.5px;line-height:3px;letter-spacing:-0.09px;color:#888;overflow:hidden;width:50px">Proin eget tortor risus. Donec sollicitudin molestie</div><div class="m" style="left:41.0px;top:77.2px;font-size:2.5px;line-height:3px;letter-spacing:-0.56px;color:#888;overflow:hidden;width:26px">Proin eget tortor risus. Donec sollicitudin molestie</div><div class="abs" style="left:40.0px;top:83.0px;width:26.7px;height:7.0px;background:#fff;border:.8px solid #d9d4cc;border-radius:1px"></div><div class="m" style="left:43.8px;top:85.2px;font-size:2.2px;line-height:2.6px;letter-spacing:-0.11px;color:#777;">Explore My Collection</div></div></div><div class="n" style="letter-spacing:0.18px">Fashion Stylist</div><div class="s" style="letter-spacing:0.15px">Layout Pack</div></div>
<div class="card" style="left:1230.0px;top:250.9px"><div class="img" style="background:#bf3528"><div class="abs" style="left:-1.0px;top:-0.1px;width:206px;height:155px"><div class="abs" style="left:-1.0px;top:-1.0px;width:209.0px;height:156.0px;background:#bf3528;"></div><div class="m" style="left:9.0px;top:11.4px;font-size:20px;line-height:24px;letter-spacing:0.00px;color:#fdf6ec;font-weight:bold;transform:scaleX(1.162);transform-origin:left center;">Chinese Food</div><div class="m" style="left:9.0px;top:40.5px;font-size:2.4px;line-height:2.9px;letter-spacing:-0.13px;color:#f3d5c9;overflow:hidden;width:107px">Lorem ipsum dolor sit amet consectetur adipiscing elit sed do eiusmod tempor incididunt ut labore et dolore magna</div><div class="m" style="left:9.0px;top:44.1px;font-size:2.4px;line-height:2.9px;letter-spacing:-0.10px;color:#f3d5c9;overflow:hidden;width:111px">Lorem ipsum dolor sit amet consectetur adipiscing elit sed do eiusmod tempor incididunt ut labore et dolore magna</div><div class="m" style="left:9.0px;top:47.8px;font-size:2.4px;line-height:2.9px;letter-spacing:-0.18px;color:#f3d5c9;overflow:hidden;width:102px">Lorem ipsum dolor sit amet consectetur adipiscing elit sed do eiusmod tempor incididunt ut labore et dolore magna</div><div class="abs" style="left:142.0px;top:39.7px;width:23.0px;height:6.5px;background:#fdf6ec;"></div><div class="m" style="left:146.5px;top:41.7px;font-size:2.2px;line-height:2.6px;letter-spacing:-0.27px;color:#7a2a20;font-weight:bold;">RESERVATIONS</div><div class="abs" style="left:142.0px;top:48.4px;width:25.0px;height:6.6px;background:transparent;border:.8px solid #e9a89a"></div><div class="m" style="left:147.5px;top:50.4px;font-size:2.2px;line-height:2.6px;letter-spacing:-0.26px;color:#f3d5c9;font-weight:bold;">ORDER ONLINE</div><svg class="abs" style="left:0;top:0" width="206" height="155" viewBox="0 0 206 155"><path d="M25 69c2-3 8-5 16-5 20-2 60-3 90-3.500 28-.5 55-1.500 75-.5V101h-7V74H30c-3 0-6-2-5-5z" fill="#050505"/><path d="M27 63c6-2 20-3 40-3.500l-10 2z" fill="#050505"/></svg><div class="abs" style="left:8.0px;top:73.4px;width:92.4px;height:82.0px;background:linear-gradient(100deg,#e6e5e6 0%,#efeeee 50%,#f1efef 100%);"></div><div class="abs" style="left:40.0px;top:96.0px;width:54.0px;height:2.0px;background:#d9a679;transform:rotate(-38deg);transform-origin:left center;left:47px;top:125px"></div><div class="abs" style="left:40.0px;top:96.0px;width:52.0px;height:2.0px;background:#c9935f;transform:rotate(-36deg);transform-origin:left center;left:49px;top:128px"></div><div class="abs" style="left:84.0px;top:80.0px;width:16.4px;height:24.0px;background:linear-gradient(180deg,#e5b9a6,#d69a8a);border-radius:8px 0 0 9px"></div><div class="abs" style="left:28.0px;top:116.0px;width:24.0px;height:14.0px;background:linear-gradient(160deg,#b7a455,#8e8340 60%,#c9a259);border-radius:3px 12px 10px 12px;transform:rotate(18deg)"></div><div class="abs" style="left:106px;top:73.400px;width:93px;height:82px;overflow:hidden;background:#e3e6ed"><div class="abs" style="left:4.0px;top:-8.0px;width:32.0px;height:32.0px;background:#8c93a3;border-radius:50%;"></div><div class="abs" style="left:5.0px;top:-8.0px;width:30.0px;height:28.0px;background:#7f8a55;border-radius:50%;"></div><div class="abs" style="left:6.0px;top:3.0px;width:28.0px;height:4.0px;background:#a6a86a;transform:rotate(20deg)"></div><div class="abs" style="left:6.0px;top:6.0px;width:28.0px;height:4.0px;background:#6f7a45;transform:rotate(-35deg)"></div><div class="abs" style="left:39.0px;top:4.0px;width:66.0px;height:72.0px;background:#ece6df;border-radius:50%;"></div><div class="abs" style="left:43.0px;top:8.0px;width:58.0px;height:64.0px;background:#f4efe9;border-radius:50%;"></div><div class="abs" style="left:48.0px;top:8.5px;width:18.0px;height:17.0px;background:#23262d;border-radius:50%;"></div><div class="abs" style="left:55.0px;top:35.5px;width:18.0px;height:17.0px;background:#23262d;border-radius:50%;"></div><div class="abs" style="left:75.5px;top:28.0px;width:17.0px;height:16.0px;background:#23262d;border-radius:50%;"></div><div class="abs" style="left:55.0px;top:12.0px;width:6.0px;height:4.0px;background:#c9a436;border-radius:50%;"></div><div class="abs" style="left:63.0px;top:39.0px;width:6.0px;height:4.0px;background:#c9a436;border-radius:50%;"></div><div class="abs" style="left:60.0px;top:-10.0px;width:40.0px;height:28.0px;background:#efe9e3;border-radius:50%;"></div><div class="abs" style="left:-30.0px;top:29.0px;width:48.0px;height:66.0px;background:#efe8e4;border-radius:50%;"></div><div class="abs" style="left:-22.0px;top:36.0px;width:36.0px;height:52.0px;background:#e9d0cc;border-radius:50%;"></div><div class="abs" style="left:19.0px;top:53.0px;width:34.0px;height:34.0px;background:#efe9e2;border-radius:50%;"></div><div class="abs" style="left:22.0px;top:56.0px;width:28.0px;height:28.0px;background:#cfc48a;border-radius:50%;"></div><div class="abs" style="left:28.0px;top:64.0px;width:10.0px;height:8.0px;background:#e3dcae;border-radius:50%;"></div><div class="abs" style="left:36.0px;top:71.0px;width:8.0px;height:6.0px;background:#a9b06a;border-radius:50%;"></div><div class="abs" style="left:55.0px;top:72.0px;width:30.0px;height:24.0px;background:#d9cfc3;border-radius:50%;"></div><div class="abs" style="left:58.0px;top:76.0px;width:24.0px;height:18.0px;background:#efe9e2;border-radius:50%;"></div></div></div></div><div class="n" style="letter-spacing:0.09px">Chinese Restaurant</div><div class="s" style="letter-spacing:0.15px">Layout Pack</div></div>
<div class="card" style="left:329.2px;top:501.3px"><div class="img" style="background:#b0aca7"><div class="abs" style="left:-0.2px;top:-0.8px;width:206px;height:155px"><div class="abs" style="left:-1.0px;top:-1.0px;width:209.0px;height:156.0px;background:#f1eee9;"></div><div class="abs" style="left:34px;top:11.700px;width:44.700px;height:67.300px;border-radius:22.400px;overflow:hidden;background:linear-gradient(180deg,#3b3b31 0%,#3a3a30 52%,#cbc4c2 54%,#d2cbc8 100%)"><div class="abs" style="left:18.0px;top:17.0px;width:14.0px;height:18.0px;background:#d8b681;border-radius:50%;"></div><div class="abs" style="left:20.8px;top:22.0px;width:8.4px;height:10.0px;background:#e3bf9f;border-radius:50%;"></div><div class="abs" style="left:14.0px;top:34.0px;width:22.0px;height:30.0px;background:#d6cdc9;border-radius:9px 9px 3px 3px"></div><div class="abs" style="left:19.0px;top:40.0px;width:24.0px;height:13.0px;background:linear-gradient(180deg,#4a2c1c,#2c1a12);border-radius:1px"></div><div class="abs" style="left:14.0px;top:55.0px;width:16.0px;height:12.0px;background:#a9b4c2;border-radius:6px"></div></div><div class="abs" style="left:33.9px;top:11.7px;width:11.6px;height:11.6px;background:#f1978b;border-radius:50%;"></div><div class="abs" style="left:34.0px;top:90.0px;width:90.0px;height:0.8px;background:#4d4d4d;"></div><div class="m" style="left:34.0px;top:92.4px;font-size:13.6px;line-height:16.3px;letter-spacing:0.02px;color:#1f1f1f;font-weight:bold;font-family:'Liberation Serif',serif;">Change Starts</div><div class="m" style="left:34.0px;top:106.6px;font-size:13.6px;line-height:16.3px;letter-spacing:-0.15px;color:#1f1f1f;font-weight:bold;font-family:'Liberation Serif',serif;">Here</div><div class="m" style="left:132.0px;top:16.2px;font-size:2.5px;line-height:3px;letter-spacing:-0.23px;color:#333;font-weight:bold;">DR. ANNA WITKINS, PSYCHOLOGIST</div><div class="m" style="left:132.0px;top:22.6px;font-size:2.4px;line-height:2.9px;letter-spacing:-0.71px;color:#999;overflow:hidden;width:14px">appointments available online today</div><div class="m" style="left:132.0px;top:26.2px;font-size:2.4px;line-height:2.9px;letter-spacing:-0.56px;color:#999;overflow:hidden;width:19px">appointments available online today</div><div class="m" style="left:132.0px;top:29.8px;font-size:2.4px;line-height:2.9px;letter-spacing:-0.03px;color:#999;overflow:hidden;width:37px">appointments available online today</div><div class="abs" style="left:132.0px;top:37.0px;width:23.0px;height:6.5px;background:#1d4d4f;"></div><div class="m" style="left:136.5px;top:39.0px;font-size:2.2px;line-height:2.6px;letter-spacing:-0.39px;color:#dfeaea;font-weight:bold;">BOOK A SESSION</div><div class="abs" style="left:132.0px;top:47.0px;width:21.0px;height:7.5px;background:#f1eee9;border:.9px solid #56605c"></div><div class="m" style="left:136.5px;top:49.5px;font-size:2.2px;line-height:2.6px;letter-spacing:-0.31px;color:#333;font-weight:bold;">LEARN MORE</div><div class="abs" style="left:0;top:133px;width:206px;height:22px;overflow:hidden;background:linear-gradient(90deg,#9c9894 0%,#cfcbc6 8%,#d9d5d0 18%,#c1bdb8 24%,#a9a5a0 30%,#b3afaa 50%,#a9a5a0 80%,#cfcbc6 90%,#a39f9b 96%,#d5d1cc 100%)"><div class="abs" style="left:45.5px;top:-0.5px;width:13.0px;height:13.0px;background:radial-gradient(circle at 40% 35%,#d4d0cb,#a6a29d 70%,#8f8b87);border-radius:50%;"></div><div class="abs" style="left:57.0px;top:-0.5px;width:13.0px;height:13.0px;background:radial-gradient(circle at 40% 35%,#d4d0cb,#a6a29d 70%,#8f8b87);border-radius:50%;"></div><div class="abs" style="left:68.5px;top:-0.5px;width:13.0px;height:13.0px;background:radial-gradient(circle at 40% 35%,#d4d0cb,#a6a29d 70%,#8f8b87);border-radius:50%;"></div><div class="abs" style="left:80.0px;top:-0.5px;width:13.0px;height:13.0px;background:radial-gradient(circle at 40% 35%,#d4d0cb,#a6a29d 70%,#8f8b87);border-radius:50%;"></div><div class="abs" style="left:91.5px;top:-0.5px;width:13.0px;height:13.0px;background:radial-gradient(circle at 40% 35%,#d4d0cb,#a6a29d 70%,#8f8b87);border-radius:50%;"></div><div class="abs" style="left:103.0px;top:-0.5px;width:13.0px;height:13.0px;background:radial-gradient(circle at 40% 35%,#d4d0cb,#a6a29d 70%,#8f8b87);border-radius:50%;"></div><div class="abs" style="left:114.5px;top:-0.5px;width:13.0px;height:13.0px;background:radial-gradient(circle at 40% 35%,#d4d0cb,#a6a29d 70%,#8f8b87);border-radius:50%;"></div><div class="abs" style="left:126.0px;top:-0.5px;width:13.0px;height:13.0px;background:radial-gradient(circle at 40% 35%,#d4d0cb,#a6a29d 70%,#8f8b87);border-radius:50%;"></div><div class="abs" style="left:137.5px;top:-0.5px;width:13.0px;height:13.0px;background:radial-gradient(circle at 40% 35%,#d4d0cb,#a6a29d 70%,#8f8b87);border-radius:50%;"></div><div class="abs" style="left:149.0px;top:-0.5px;width:13.0px;height:13.0px;background:radial-gradient(circle at 40% 35%,#d4d0cb,#a6a29d 70%,#8f8b87);border-radius:50%;"></div><div class="abs" style="left:160.5px;top:-0.5px;width:13.0px;height:13.0px;background:radial-gradient(circle at 40% 35%,#d4d0cb,#a6a29d 70%,#8f8b87);border-radius:50%;"></div><div class="abs" style="left:48.0px;top:10.0px;width:126.0px;height:12.0px;background:linear-gradient(180deg,#aeaaa5,#c4c0bb);"></div></div></div></div><div class="n" style="letter-spacing:0.34px">Psychology</div><div class="s" style="letter-spacing:0.15px">Layout Pack</div></div>
<div class="card" style="left:554.4px;top:501.3px"><div class="img" style="background:#fff"><div class="abs" style="left:-0.4px;top:-0.8px;width:206px;height:155px"><div class="abs" style="left:-1.0px;top:-1.0px;width:209.0px;height:122.0px;background:linear-gradient(98deg,#2a10c6 0%,#1a10c8 22%,#1632dc 40%,#1468ee 57%,#10a0f2 75%,#0fc2e8 90%,#12d2d2 100%);"></div><div class="abs" style="left:0.0px;top:0.0px;width:90.0px;height:80.0px;background:radial-gradient(ellipse at 0% 0%,rgba(255,14,150,1) 0%,rgba(230,16,160,.85) 18%,rgba(150,18,190,.5) 42%,rgba(60,16,200,0) 72%);"></div><div class="abs" style="left:-1.0px;top:-1.0px;width:209.0px;height:122.0px;background:linear-gradient(180deg,rgba(255,255,255,0) 55%,rgba(20,40,220,.35) 100%);"></div><div class="abs" style="left:150.0px;top:60.0px;width:56.0px;height:61.0px;background:radial-gradient(ellipse at 100% 100%,rgba(20,225,190,.75) 0%,rgba(20,225,190,0) 70%);"></div><div class="m" style="left:21.7px;top:25.8px;font-size:15.7px;line-height:18.8px;letter-spacing:0.00px;color:#fff;transform:scaleX(1.130);transform-origin:left center;-webkit-text-stroke:.2px #fff">Divi Meetup</div><div class="m" style="left:21.7px;top:43.8px;font-size:15.7px;line-height:18.8px;letter-spacing:0.00px;color:#fff;transform:scaleX(1.095);transform-origin:left center;-webkit-text-stroke:.2px #fff">2024, SF, CA</div><div class="m" style="left:137.6px;top:29.2px;font-size:3px;line-height:3.6px;letter-spacing:0.04px;color:#d9ecff;font-weight:bold;">August 25 - 28</div><div class="m" style="left:137.6px;top:36.0px;font-size:2.4px;line-height:2.9px;letter-spacing:-0.05px;color:#a9d8f8;overflow:hidden;width:46px">Join us for three days of talks and workshops</div><div class="m" style="left:137.6px;top:39.5px;font-size:2.4px;line-height:2.9px;letter-spacing:-0.16px;color:#a9d8f8;overflow:hidden;width:41px">Join us for three days of talks and workshops</div><div class="abs" style="left:21.3px;top:70.4px;width:34.7px;height:27.0px;background:#fff;"></div><div class="m" style="left:34.1px;top:82.7px;font-size:2.2px;line-height:2.6px;letter-spacing:-0.32px;color:#222;font-weight:bold;">REGISTER</div><div class="abs" style="left:64.4px;top:70.4px;width:122.2px;height:27.0px;background:transparent;border:.6px dashed rgba(255,255,255,.28)"></div><div class="m" style="left:84.7px;top:77.2px;font-size:7.2px;line-height:8.6px;letter-spacing:0.74px;color:#eaf6ff;">076</div><div class="m" style="left:87.4px;top:86.3px;font-size:2px;line-height:2.4px;letter-spacing:0.19px;color:#bfe3fa;">HOURS</div><div class="m" style="left:109.2px;top:77.2px;font-size:7.2px;line-height:8.6px;letter-spacing:1.49px;color:#eaf6ff;">09</div><div class="m" style="left:110.0px;top:86.3px;font-size:2px;line-height:2.4px;letter-spacing:0.19px;color:#bfe3fa;">HOURS</div><div class="m" style="left:131.9px;top:77.2px;font-size:7.2px;line-height:8.6px;letter-spacing:1.49px;color:#eaf6ff;">24</div><div class="m" style="left:132.7px;top:86.3px;font-size:2px;line-height:2.4px;letter-spacing:0.19px;color:#bfe3fa;">HOURS</div><div class="m" style="left:154.8px;top:77.2px;font-size:7.2px;line-height:8.6px;letter-spacing:1.49px;color:#eaf6ff;">48</div><div class="m" style="left:155.6px;top:86.3px;font-size:2px;line-height:2.4px;letter-spacing:0.19px;color:#bfe3fa;">HOURS</div><div class="m" style="left:102.2px;top:78.4px;font-size:6px;line-height:7.2px;letter-spacing:0.00px;color:#9fd0f5;">:</div><div class="m" style="left:124.7px;top:78.4px;font-size:6px;line-height:7.2px;letter-spacing:0.00px;color:#9fd0f5;">:</div><div class="m" style="left:147.7px;top:78.4px;font-size:6px;line-height:7.2px;letter-spacing:0.00px;color:#9fd0f5;">:</div><div class="abs" style="left:108.0px;top:123.0px;width:34.4px;height:25.4px;background:linear-gradient(180deg,#3fe0c8 0%,#7eeadb 50%,#b5f3ea 100%);border-radius:1px;box-shadow:0 1px 2px rgba(0,0,0,.12)"></div><div class="abs" style="left:112.0px;top:129.5px;width:26.0px;height:0.6px;background:#5cc9b8;"></div><div class="abs" style="left:112.0px;top:134.7px;width:26.0px;height:0.6px;background:#5cc9b8;"></div><div class="abs" style="left:112.0px;top:139.9px;width:26.0px;height:0.6px;background:#5cc9b8;"></div><div class="m" style="left:33.0px;top:146.6px;font-size:2.3px;line-height:2.8px;letter-spacing:-0.19px;color:#333;font-weight:bold;">ABOUT THE EVENT</div><div class="m" style="left:33.0px;top:152.1px;font-size:8.2px;line-height:9.8px;letter-spacing:0.05px;color:#222;">The biggest event</div><div class="abs" style="left:157.5px;top:147.5px;width:4.0px;height:4.0px;background:#1a1a1a;border-radius:50%;"></div><div class="abs" style="left:158.0px;top:151.0px;width:3.6px;height:4.0px;background:#fff;border:.6px solid #444;border-radius:1.500px 1.500px 0 0"></div><div class="abs" style="left:170.0px;top:138.0px;width:16.0px;height:0.6px;background:#999;transform:rotate(-48deg)"></div><div class="abs" style="left:181.0px;top:125.0px;width:5.0px;height:0.6px;background:#999;transform:rotate(-60deg)"></div><div class="abs" style="left:178.0px;top:148.0px;width:6.0px;height:6.0px;background:transparent;border:.6px solid #aaa;border-radius:2px"></div></div></div><div class="n" style="letter-spacing:0.22px">Conference Event</div><div class="s" style="letter-spacing:0.15px">Layout Pack</div></div>
<div class="card" style="left:779.6px;top:501.3px"><div class="img" style="background:#fff"><div class="abs" style="left:-0.6px;top:-0.8px;width:206px;height:155px"><div class="abs" style="left:-1.0px;top:-1.0px;width:125.0px;height:120.5px;background:#ebebea;"></div><div class="abs" style="left:124.0px;top:-1.0px;width:85.0px;height:120.5px;background:#2e465c;"></div><div class="abs" style="left:-1.0px;top:119.5px;width:209.0px;height:28.0px;background:#c0c7bf;"></div><div class="m" style="left:32.0px;top:25.6px;font-size:2.3px;line-height:2.8px;letter-spacing:-0.14px;color:#555;">BEST SELLING AUTHOR</div><div class="m" style="left:32.0px;top:30.2px;font-size:10.8px;line-height:13px;letter-spacing:-0.47px;color:#3a3a3a;font-family:'Liberation Serif',serif;">Brooklyn</div><div class="m" style="left:32.0px;top:40.7px;font-size:10.8px;line-height:13px;letter-spacing:-0.39px;color:#3a3a3a;font-family:'Liberation Serif',serif;">Simmons</div><div class="m" style="left:32.0px;top:55.1px;font-size:2.5px;line-height:3px;letter-spacing:-0.36px;color:#777;overflow:hidden;width:58px">Curabitur aliquet quam id dui posuere blandit. Vivamus suscipit tortor eget felis</div><div class="m" style="left:32.0px;top:59.0px;font-size:2.5px;line-height:3px;letter-spacing:-0.30px;color:#777;overflow:hidden;width:63px">Curabitur aliquet quam id dui posuere blandit. Vivamus suscipit tortor eget felis</div><div class="m" style="left:32.0px;top:62.9px;font-size:2.5px;line-height:3px;letter-spacing:-0.57px;color:#777;overflow:hidden;width:41px">Curabitur aliquet quam id dui posuere blandit. Vivamus suscipit tortor eget felis</div><div class="abs" style="left:32.0px;top:70.0px;width:28.7px;height:7.0px;background:#c0452a;"></div><div class="m" style="left:37.8px;top:72.3px;font-size:2.2px;line-height:2.6px;letter-spacing:-0.22px;color:#f7ddd5;font-weight:bold;">READ THE BOOKS</div><div class="abs" style="left:114.6px;top:19.0px;width:53.4px;height:78.4px;background:#fff;box-shadow:-2px 3px 6px rgba(0,0,0,.18)"></div><div class="abs" style="left:116.3px;top:21.0px;width:50.0px;height:23.5px;background:#2e465c;"></div><svg class="abs" style="left:116.300px;top:44px" width="50" height="46" viewBox="0 0 50 46"><rect width="50" height="25" fill="#c4c7be"/><path d="M0 0h50v2.500C33 3 26 10 25 24 24 10 17 3 0 2.500z" fill="#2e465c"/><path d="M0 27h21c3 0 4 4 4 9 0-5 1-9 4-9h21v5c0 7-9 12-21 12h-8C9 44 0 39 0 32z" fill="#e2e6e0"/></svg><div class="m" style="left:122.0px;top:27.6px;font-size:6.4px;line-height:7.7px;letter-spacing:0.03px;color:#eef1f4;">The Monarch</div><div class="m" style="left:132.2px;top:35.4px;font-size:6.4px;line-height:7.7px;letter-spacing:0.25px;color:#eef1f4;">Effect</div><div class="m" style="left:131.0px;top:88.6px;font-size:3px;line-height:3.6px;letter-spacing:0.09px;color:#666;">B.B. Simmons</div><div class="m" style="left:132.8px;top:103.7px;font-size:2.2px;line-height:2.6px;letter-spacing:-0.32px;color:#e8edf2;font-weight:bold;">READ THE SAMPLE</div><div class="m" style="left:32.0px;top:125.8px;font-size:5.3px;line-height:6.4px;letter-spacing:-0.06px;color:#4a4f4a;font-family:'Liberation Serif',serif;">Get a Free Short Story When</div><div class="m" style="left:32.0px;top:132.8px;font-size:5.3px;line-height:6.4px;letter-spacing:-0.09px;color:#4a4f4a;font-family:'Liberation Serif',serif;">You Join My Book Club</div><div class="abs" style="left:108.0px;top:125.6px;width:66.6px;height:6.4px;background:#cfd1c6;border:.7px solid #aeb2a6"></div><div class="m" style="left:110.0px;top:127.6px;font-size:2px;line-height:2.4px;letter-spacing:-0.25px;color:#8a8f84;">EMAIL</div><div class="abs" style="left:108.0px;top:134.4px;width:66.6px;height:6.6px;background:#2e465c;"></div><div class="m" style="left:135.8px;top:136.4px;font-size:2.2px;line-height:2.6px;letter-spacing:-0.24px;color:#e8edf2;font-weight:bold;">SUBSCRIBE</div></div></div><div class="n" style="letter-spacing:0.44px">Writer</div><div class="s" style="letter-spacing:0.15px">Layout Pack</div></div>
<div class="card" style="left:1004.8px;top:501.3px"><div class="img" style="background:#f5efe3"><div class="abs" style="left:-0.8px;top:-0.8px;width:206px;height:155px"><div class="abs" style="left:-1.0px;top:-1.0px;width:209.0px;height:156.0px;background:#f5efe3;"></div><div class="m" style="left:8.2px;top:23.9px;font-size:18.2px;line-height:21.8px;letter-spacing:-0.01px;color:#2b2520;font-weight:bold;font-family:'Liberation Serif',serif;">Treat Your</div><div class="m" style="left:8.2px;top:41.2px;font-size:18.2px;line-height:21.8px;letter-spacing:0.03px;color:#2b2520;font-weight:bold;font-family:'Liberation Serif',serif;">Skin With</div><div class="m" style="left:8.2px;top:58.5px;font-size:18.2px;line-height:21.8px;letter-spacing:-0.64px;color:#2b2520;font-weight:bold;font-family:'Liberation Serif',serif;">Love</div><div class="abs" style="left:8.2px;top:84.7px;width:32.6px;height:15.0px;background:transparent;border:.8px solid #cfc6b6;border-radius:7.500px"></div><div class="abs" style="left:9.7px;top:86.2px;width:29.6px;height:12.0px;background:transparent;border:.6px solid #ddd5c7;border-radius:6px"></div><div class="m" style="left:17.5px;top:90.8px;font-size:2.3px;line-height:2.8px;letter-spacing:0.18px;color:#8a8272;">SHOP NOW</div><div class="abs" style="left:109px;top:9.300px;width:90px;height:113.700px;overflow:hidden;background:#cfc9bc"><svg class="abs" style="left:0;top:0" width="90" height="114" viewBox="0 0 90 114"><path d="M0 52L90 32v82H0z" fill="#b08560"/><path d="M0 52L90 32v8L0 60z" fill="#c9a27c"/><path d="M0 86l90-8v6L0 92zM0 98l90-6v3L0 102z" fill="#946c4a"/><path d="M0 42l10 8-6 22-4 1z" fill="#e3e2e0"/><ellipse cx="47.500" cy="68" rx="35" ry="19.500" fill="#d9d2c8"/><ellipse cx="47.500" cy="66" rx="35" ry="19" fill="#eee8e0"/><path d="M30 52l34-10 3 14-3 10-32 3z" fill="#35363a"/><path d="M30 52l34-10 2 6-34 10z" fill="#4a4b50"/><path d="M25 34c0-3 2-5 5-6l28-8c4-1 7 1 8 4l2 14c0 3-1 5-4 6L36 54c-4 1-7-1-8-4z" fill="#ece8e0"/><path d="M25 34c0-3 2-5 5-6l28-8c4-1 7 1 8 4l-38 14z" fill="#f5f2ec"/><path d="M0 28C0 18 8 14 14 12 22 9 23 4 23 0" fill="none" stroke="#7e7b56" stroke-width="12"/><path d="M24 116c-2-10 6-15 20-13 16 2 25-3 27-12 2-10 9-14 22-13" fill="none" stroke="#7e7b56" stroke-width="12"/></svg></div><div class="m" style="left:8.2px;top:136.8px;font-size:6px;line-height:7.2px;letter-spacing:0.12px;color:#7e7b56;font-weight:bold;font-family:'Liberation Serif',serif;">Shop Our</div><div class="m" style="left:8.2px;top:143.0px;font-size:6px;line-height:7.2px;letter-spacing:0.25px;color:#7e7b56;font-weight:bold;font-family:'Liberation Serif',serif;">Favorites</div><div class="m" style="left:8.2px;top:151.8px;font-size:2.8px;line-height:3.4px;letter-spacing:0.20px;color:#8a8272;">The skincare that your</div><div class="abs" style="left:59.2px;top:137.0px;width:39.0px;height:42.0px;background:#b9b4a4;border-radius:50%;"></div><div class="abs" style="left:109px;top:137.600px;width:39px;height:18px;overflow:hidden;background:#cfc6b6"><div class="abs" style="left:9.0px;top:10.0px;width:22.0px;height:18.0px;background:#4a3a30;border-radius:50%;"></div><div class="abs" style="left:14.0px;top:15.0px;width:12.0px;height:12.0px;background:#d9b49a;border-radius:50%;"></div></div><div class="abs" style="left:158px;top:137px;width:42px;height:42px;border-radius:21px;overflow:hidden;background:#a88058"><div class="abs" style="left:2.0px;top:4.0px;width:24.0px;height:20.0px;background:#c9a47a;border-radius:50%;"></div><div class="abs" style="left:26.0px;top:4.0px;width:8.0px;height:8.0px;background:#f08a7a;border-radius:50%;"></div><div class="abs" style="left:17.0px;top:6.0px;width:4.0px;height:14.0px;background:#2a2a2a;border-radius:1px"></div></div></div></div><div class="n" style="letter-spacing:0.04px">Skin Care</div><div class="s" style="letter-spacing:0.15px">Layout Pack</div></div>
<div class="card" style="left:1230.0px;top:501.3px"><div class="img" style="background:#fff"><div class="abs" style="left:-1.0px;top:-0.8px;width:206px;height:155px"><div class="abs" style="left:-1.0px;top:-1.0px;width:209.0px;height:112.5px;background:#1b2954;"></div><div class="m" style="left:21.7px;top:11.6px;font-size:2.3px;line-height:2.8px;letter-spacing:-0.23px;color:#c9d0e6;">PRODUCT DESIGNER</div><div class="m" style="left:21.2px;top:17.7px;font-size:20.5px;line-height:24.6px;letter-spacing:0.00px;color:#fff;transform:scaleX(1.079);transform-origin:left center;-webkit-text-stroke:.3px #fff">Cameron</div><div class="m" style="left:21.2px;top:37.2px;font-size:20.5px;line-height:24.6px;letter-spacing:0.00px;color:#fff;transform:scaleX(1.055);transform-origin:left center;-webkit-text-stroke:.3px #fff">Williamson</div><div class="abs" style="left:21.0px;top:63.7px;width:19.0px;height:5.5px;background:#fff;"></div><div class="m" style="left:24.5px;top:65.3px;font-size:2px;line-height:2.4px;letter-spacing:-0.33px;color:#1b2954;font-weight:bold;">DOWNLOAD CV</div><div class="m" style="left:21.7px;top:80.4px;font-size:7.2px;line-height:8.6px;letter-spacing:-0.47px;color:#fff;font-weight:bold;">About Me</div><div class="m" style="left:21.7px;top:91.2px;font-size:2.2px;line-height:2.6px;letter-spacing:-0.10px;color:#aab4d4;">cameron@diviwebdesign.com</div><div class="m" style="left:21.7px;top:96.4px;font-size:2.2px;line-height:2.6px;letter-spacing:-0.08px;color:#aab4d4;">(255) 352-6258</div><div class="m" style="left:79.4px;top:80.8px;font-size:3.7px;line-height:4.4px;letter-spacing:-0.80px;color:#fff;font-weight:bold;overflow:hidden;width:95px">Lorem ipsum dolor sit amet consectetur adipiscing elit venenatis scelerisque quisque dignissim</div><div class="m" style="left:79.4px;top:85.8px;font-size:3.7px;line-height:4.4px;letter-spacing:-0.71px;color:#fff;font-weight:bold;overflow:hidden;width:103px">Lorem ipsum dolor sit amet consectetur adipiscing elit venenatis scelerisque quisque dignissim</div><div class="m" style="left:79.4px;top:90.8px;font-size:3.7px;line-height:4.4px;letter-spacing:-0.76px;color:#fff;font-weight:bold;overflow:hidden;width:98.5px">Lorem ipsum dolor sit amet consectetur adipiscing elit venenatis scelerisque quisque dignissim</div><div class="m" style="left:79.4px;top:95.8px;font-size:3.7px;line-height:4.4px;letter-spacing:-1.08px;color:#fff;font-weight:bold;overflow:hidden;width:69px">Lorem ipsum dolor sit amet consectetur adipiscing elit venenatis scelerisque quisque dignissim</div><div class="abs" style="left:157px;top:19.800px;width:29.300px;height:29px;overflow:hidden;background:linear-gradient(180deg,#a9b9db,#b9c5df)"><div class="abs" style="left:8.0px;top:7.0px;width:15.0px;height:10.0px;background:#1c1c22;border-radius:50%;"></div><div class="abs" style="left:11.0px;top:5.5px;width:9.0px;height:7.0px;background:#1c1c22;border-radius:50%;"></div><div class="abs" style="left:11.9px;top:11.3px;width:7.2px;height:8.4px;background:#d9a98d;border-radius:50%;"></div><div class="abs" style="left:7.0px;top:21.0px;width:17.0px;height:9.0px;background:#d6a99a;border-radius:6px 6px 0 0"></div><div class="abs" style="left:12.0px;top:21.0px;width:7.0px;height:9.0px;background:#3a2a2a;"></div></div><div class="abs" style="left:173.0px;top:53.8px;width:2.0px;height:2.4px;background:#8a96c0;border-radius:50%;"></div><div class="abs" style="left:178.5px;top:53.8px;width:2.0px;height:2.4px;background:#8a96c0;border-radius:50%;"></div><div class="abs" style="left:184.0px;top:53.8px;width:2.0px;height:2.4px;background:#8a96c0;border-radius:50%;"></div><div class="m" style="left:21.7px;top:122.7px;font-size:7.2px;line-height:8.6px;letter-spacing:-0.33px;color:#20222c;-webkit-text-stroke:.12px #20222c">Work Experience</div><div class="m" style="left:21.7px;top:139.3px;font-size:2.2px;line-height:2.6px;letter-spacing:-0.15px;color:#555;">2021 - Present</div><div class="m" style="left:79.4px;top:139.2px;font-size:2.6px;line-height:3.1px;letter-spacing:-0.12px;color:#222;font-weight:bold;">Director of Design</div><div class="m" style="left:79.4px;top:144.0px;font-size:2.3px;line-height:2.8px;letter-spacing:-0.15px;color:#555;">Elegant Themes, SF, CA</div><div class="m" style="left:79.4px;top:149.1px;font-size:2.3px;line-height:2.8px;letter-spacing:-0.08px;color:#b5b5b8;overflow:hidden;width:105px">Lorem ipsum dolor sit amet consectetur adipiscing elit venenatis scelerisque quisque dignissim lobortis rhoncus</div><div class="m" style="left:79.4px;top:152.7px;font-size:2.3px;line-height:2.8px;letter-spacing:-0.08px;color:#b5b5b8;overflow:hidden;width:105px">Lorem ipsum dolor sit amet consectetur adipiscing elit venenatis scelerisque quisque dignissim lobortis rhoncus</div></div></div><div class="n" style="letter-spacing:0.05px">Business CV</div><div class="s" style="letter-spacing:0.15px">Layout Pack</div></div>
<div class="card" style="left:329.2px;top:751.7px"><div class="img" style="background:#0f4f40"><div class="abs" style="left:-0.2px;top:-1.7px;width:206px;height:155px"><div class="abs" style="left:-1.0px;top:-1.0px;width:209.0px;height:156.0px;background:#fff;"></div><svg class="abs" style="left:80px;top:9px" width="48" height="20" viewBox="-24 -18 48 20"><g><rect x="-1.1" y="-17" width="2.200" height="7" rx="1.1" fill="#1d4f40" transform="rotate(-54)"/><rect x="-1.1" y="-17" width="2.200" height="7" rx="1.1" fill="#1d4f40" transform="rotate(-36)"/><rect x="-1.1" y="-17" width="2.200" height="7" rx="1.1" fill="#1d4f40" transform="rotate(-18)"/><rect x="-1.1" y="-17" width="2.200" height="7" rx="1.1" fill="#1d4f40" transform="rotate(0)"/><rect x="-1.1" y="-17" width="2.200" height="7" rx="1.1" fill="#1d4f40" transform="rotate(18)"/><rect x="-1.1" y="-17" width="2.200" height="7" rx="1.1" fill="#1d4f40" transform="rotate(36)"/><rect x="-1.1" y="-17" width="2.200" height="7" rx="1.1" fill="#1d4f40" transform="rotate(54)"/></g></svg><div class="m" style="left:70.0px;top:22.0px;font-size:17px;line-height:20.4px;letter-spacing:0.00px;color:#124a3c;font-weight:bold;transform:scaleX(0.912);transform-origin:center center;">Produce</div><div class="m" style="left:83.2px;top:39.3px;font-size:17px;line-height:20.4px;letter-spacing:0.00px;color:#124a3c;font-weight:bold;transform:scaleX(0.938);transform-origin:center center;">Farm</div><div class="m" style="left:64.0px;top:61.7px;font-size:2.2px;line-height:2.6px;letter-spacing:0.05px;color:#9a9a9a;overflow:hidden;width:80px">Lorem ipsum dolor sit amet consectetur adipiscing elit sed do eiusmod tempor</div><div class="m" style="left:70.0px;top:64.4px;font-size:2.2px;line-height:2.6px;letter-spacing:-0.11px;color:#9a9a9a;overflow:hidden;width:68px">Lorem ipsum dolor sit amet consectetur adipiscing elit sed do eiusmod tempor</div><div class="abs" style="left:88.0px;top:72.0px;width:31.6px;height:4.5px;background:#f0643c;border-radius:1.500px"></div><div class="m" style="left:92.8px;top:73.0px;font-size:1.9px;line-height:2.3px;letter-spacing:-0.07px;color:#ffe0d5;font-weight:bold;">ORDER A PRODUCE BOX</div><svg class="abs" style="left:0;top:0" width="206" height="136" viewBox="0 0 206 136"><path d="M22 134c-4-16 6-24 2-46M40 134c4-14-8-22-2-40M58 132c-6-14 8-22 4-38M154 134c-6-16 8-24 0-42M176 134c8-14-8-24 4-42M190 132c-4-10 4-18 0-30" fill="none" stroke="#7d8f6a" stroke-width=".7"/><ellipse cx="20" cy="86" rx="4" ry="7" fill="#9db38a" opacity=".6" transform="rotate(-30 20 86)"/><ellipse cx="31" cy="91" rx="4" ry="7" fill="#9db38a" opacity=".6" transform="rotate(25 31 91)"/><ellipse cx="18" cy="108" rx="3.5" ry="6" fill="#9db38a" opacity=".6" transform="rotate(-40 18 108)"/><ellipse cx="38" cy="112" rx="3.5" ry="6" fill="#9db38a" opacity=".6" transform="rotate(30 38 112)"/><ellipse cx="54" cy="100" rx="4" ry="8" fill="#9db38a" opacity=".6" transform="rotate(-20 54 100)"/><ellipse cx="63" cy="92" rx="3.5" ry="7" fill="#9db38a" opacity=".6" transform="rotate(20 63 92)"/><ellipse cx="14" cy="128" rx="3" ry="5" fill="#9db38a" opacity=".6" transform="rotate(-30 14 128)"/><ellipse cx="48" cy="118" rx="3" ry="6" fill="#9db38a" opacity=".6" transform="rotate(35 48 118)"/><ellipse cx="60" cy="116" rx="3.5" ry="6" fill="#9db38a" opacity=".6" transform="rotate(-30 60 116)"/><ellipse cx="150" cy="92" rx="4" ry="7" fill="#9db38a" opacity=".6" transform="rotate(30 150 92)"/><ellipse cx="160" cy="87" rx="4.5" ry="7" fill="#9db38a" opacity=".6" transform="rotate(-30 160 87)"/><ellipse cx="168" cy="98" rx="3.5" ry="6" fill="#9db38a" opacity=".6" transform="rotate(40 168 98)"/><ellipse cx="164" cy="110" rx="4" ry="7" fill="#9db38a" opacity=".6" transform="rotate(-30 164 110)"/><ellipse cx="178" cy="90" rx="3" ry="6" fill="#9db38a" opacity=".6" transform="rotate(20 178 90)"/><ellipse cx="186" cy="96" rx="3.5" ry="6" fill="#9db38a" opacity=".6" transform="rotate(-35 186 96)"/><ellipse cx="182" cy="112" rx="4" ry="7" fill="#9db38a" opacity=".6" transform="rotate(30 182 112)"/><ellipse cx="190" cy="124" rx="3" ry="5" fill="#9db38a" opacity=".6" transform="rotate(-20 190 124)"/><ellipse cx="172" cy="126" rx="3" ry="5" fill="#9db38a" opacity=".6" transform="rotate(25 172 126)"/><ellipse cx="156" cy="106" rx="3.5" ry="6" fill="#9db38a" opacity=".6" transform="rotate(-40 156 106)"/><ellipse cx="76" cy="111" rx="12" ry="13" fill="#8c9f80"/><circle cx="70" cy="105" r="6" fill="#a0b090"/><circle cx="81" cy="104" r="6" fill="#7f9474"/><circle cx="74" cy="114" r="6" fill="#93a686"/><circle cx="84" cy="113" r="5" fill="#6f8766"/><ellipse cx="60" cy="128" rx="16" ry="8" fill="#8ea089" opacity=".8"/><ellipse cx="108" cy="106" rx="14" ry="16.500" fill="#c49a78" transform="rotate(12 108 106)"/><ellipse cx="104" cy="100" rx="7" ry="9" fill="#d4ad8c" transform="rotate(12 104 100)"/><ellipse cx="87" cy="124" rx="13" ry="5.500" fill="#57883a" transform="rotate(-32 87 124)"/><circle cx="135.500" cy="113.500" r="12.500" fill="#df472a"/><circle cx="131" cy="109" r="5" fill="#ea6a48"/><path d="M132 104l4 3 4-3-2 5-4 0z" fill="#4e7a34"/><circle cx="103.500" cy="129" r="10" fill="#ee7a28"/><circle cx="100" cy="125" r="4" fill="#f49a4c"/><ellipse cx="124.500" cy="130" rx="12" ry="9" fill="#9aa972"/><ellipse cx="122" cy="127" rx="6" ry="4" fill="#b3bf90"/><ellipse cx="145" cy="130" rx="8" ry="9" fill="#e8b030"/><rect x="151" y="112" width="4.500" height="24" rx="2" fill="#c4662a"/><path d="M120 100c8-4 24 0 28 10" fill="none" stroke="#3f3a48" stroke-width="1"/></svg><div class="abs" style="left:-1.0px;top:136.0px;width:209.0px;height:21.0px;background:#0f4f40;"></div><div class="m" style="left:48.7px;top:141.5px;font-size:5.8px;line-height:7px;letter-spacing:-0.30px;color:#f3f8f5;font-weight:bold;">Order a Fresh Produce Box</div><div class="abs" style="left:142.0px;top:141.6px;width:17.0px;height:6.0px;background:transparent;border:.7px solid #cfe0d9;border-radius:1.500px"></div><div class="m" style="left:146.0px;top:143.5px;font-size:2px;line-height:2.4px;letter-spacing:-0.46px;color:#e3efe9;font-weight:bold;">ORDER NOW</div><div class="m" style="left:48.7px;top:151.7px;font-size:2.2px;line-height:2.6px;letter-spacing:-0.11px;color:#b5cfc5;overflow:hidden;width:68px">Lorem ipsum dolor sit amet consectetur adipiscing elit sed do eiusmod tempor</div></div></div><div class="n" style="letter-spacing:0.10px">Produce Farm</div><div class="s" style="letter-spacing:0.15px">Layout Pack</div></div>
<div class="card" style="left:554.4px;top:751.7px"><div class="img" style="background:#fff"><div class="abs" style="left:-0.4px;top:-1.7px;width:206px;height:155px"><div class="abs" style="left:-1.0px;top:-1.0px;width:209.0px;height:156.0px;background:#fff;"></div><div class="abs" style="left:-1px;top:-1px;width:209px;height:105px;overflow:hidden;background:linear-gradient(100deg,#2b2624 0%,#3a3533 25%,#4b4644 50%,#5a5553 75%,#4a4442 100%)"><div class="abs" style="left:-1.0px;top:-1.0px;width:209.0px;height:13.0px;background:linear-gradient(90deg,#3e3a3b,#6f6c70 40%,#8c8a8e 55%,#6a676a 80%,#2c2a2b);"></div><div class="abs" style="left:70.0px;top:8.0px;width:80.0px;height:24.0px;background:linear-gradient(90deg,#5a5558,#8d8a8e 50%,#77747a);opacity:.8"></div><div class="abs" style="left:150.0px;top:18.0px;width:56.0px;height:30.0px;background:linear-gradient(180deg,#8b888a,#6d6a6b);opacity:.8"></div><div class="abs" style="left:0.0px;top:12.0px;width:32.0px;height:46.0px;background:#1f1b1a;"></div><div class="abs" style="left:32.0px;top:14.0px;width:34.0px;height:80.0px;background:linear-gradient(90deg,#4a3d37,#8a7d74 40%,#6a5d55 55%,#3a302c);"></div><div class="abs" style="left:38.0px;top:20.0px;width:7.0px;height:14.0px;background:#5a3f35;"></div><div class="abs" style="left:35.5px;top:25.0px;width:4.0px;height:6.0px;background:#3fae7a;border-radius:50%;"></div><div class="abs" style="left:0.0px;top:58.0px;width:70.0px;height:46.0px;background:linear-gradient(180deg,#5f5a57,#3d3836 60%,#4a4543);"></div><div class="abs" style="left:66.0px;top:60.0px;width:140.0px;height:44.0px;background:repeating-linear-gradient(115deg,#605b59 0,#605b59 2.500px,#3f3a38 2.500px,#3f3a38 5px);opacity:.75"></div><div class="abs" style="left:80.0px;top:32.0px;width:5.0px;height:60.0px;background:#7a7471;opacity:.7"></div><div class="abs" style="left:132.0px;top:42.0px;width:34.0px;height:22.0px;background:linear-gradient(180deg,#4a3a36,#2a2220);border-radius:3px 3px 10px 10px;transform:rotate(-8deg)"></div><div class="abs" style="left:134.0px;top:41.0px;width:32.0px;height:6.0px;background:#6a4a3c;border-radius:3px;transform:rotate(-8deg)"></div><div class="abs" style="left:160.0px;top:60.0px;width:36.0px;height:8.0px;background:#1c1a1a;border-radius:3px;transform:rotate(12deg)"></div><div class="abs" style="left:150.0px;top:64.0px;width:3.0px;height:24.0px;background:#2a2422;transform:rotate(4deg)"></div><div class="abs" style="left:186.0px;top:60.0px;width:20.0px;height:36.0px;background:linear-gradient(180deg,#8a5f50,#5c3a30);border-radius:12px 0 0 12px"></div><div class="abs" style="left:160.0px;top:0.0px;width:46.0px;height:14.0px;background:#2a2626;transform:rotate(12deg)"></div><div class="abs" style="left:-1.0px;top:-1.0px;width:209.0px;height:105.0px;background:rgba(20,16,15,.14);"></div></div><div class="m" style="left:60.2px;top:26.4px;font-size:10.5px;line-height:12.6px;letter-spacing:0.00px;color:#fff;font-weight:bold;transform:scaleX(0.800);transform-origin:center center;">DIVI COFFEE CO.</div><div class="m" style="left:55.6px;top:38.7px;font-size:10.5px;line-height:12.6px;letter-spacing:0.00px;color:#fff;font-weight:bold;transform:scaleX(0.829);transform-origin:center center;">WHERE EVERY SIP</div><div class="m" style="left:81.8px;top:50.7px;font-size:10.5px;line-height:12.6px;letter-spacing:0.00px;color:#fff;font-weight:bold;transform:scaleX(0.819);transform-origin:center center;">COUNTS</div><div class="m" style="left:77.5px;top:66.5px;font-size:2.4px;line-height:2.9px;letter-spacing:-0.19px;color:#d9d4d0;">Savoring the finest single-origin beans in every pour. Always.</div><div class="abs" style="left:87.0px;top:73.0px;width:34.0px;height:7.6px;background:#fff;"></div><div class="m" style="left:93.0px;top:75.5px;font-size:2.2px;line-height:2.6px;letter-spacing:-0.13px;color:#b8632f;font-weight:bold;">DISCOVER OUR MENU</div><div class="m" style="left:21.4px;top:115.8px;font-size:7px;line-height:8.4px;letter-spacing:0.00px;color:#c0642a;transform:scaleX(0.750);transform-origin:left center;">Experience the</div><div class="m" style="left:21.4px;top:124.5px;font-size:7px;line-height:8.4px;letter-spacing:0.00px;color:#c0642a;transform:scaleX(0.778);transform-origin:left center;">captivating aroma</div><div class="m" style="left:21.4px;top:133.1px;font-size:7px;line-height:8.4px;letter-spacing:0.00px;color:#c0642a;transform:scaleX(0.773);transform-origin:left center;">and robust flavors</div><div class="m" style="left:21.4px;top:141.8px;font-size:7px;line-height:8.4px;letter-spacing:0.00px;color:#c0642a;transform:scaleX(0.771);transform-origin:left center;">that define Coffee</div><div class="m" style="left:21.4px;top:150.4px;font-size:7px;line-height:8.4px;letter-spacing:0.00px;color:#c0642a;transform:scaleX(0.754);transform-origin:left center;">Haven, where each</div><div class="abs" style="left:79.4px;top:115.4px;width:48.6px;height:40.0px;background:linear-gradient(180deg,#2b2625 0%,#2f2a28 55%,#4a4645 70%,#8f8f8f 85%,#b5b5b5 100%);"></div><div class="abs" style="left:100.0px;top:145.0px;width:24.0px;height:10.0px;background:#c9c9c9;border-radius:50%;"></div><div class="abs" style="left:116.0px;top:140.0px;width:12.0px;height:15.0px;background:#1c1a1a;"></div><div class="abs" style="left:137.600px;top:115.400px;width:48.400px;height:40px;overflow:hidden;background:#f1e4e1"><div class="abs" style="left:2.0px;top:-3.0px;width:20.0px;height:10.0px;background:#8fb6cf;border-radius:50%;"></div><div class="abs" style="left:36.0px;top:5.0px;width:12.0px;height:18.0px;background:#8a8a5a;border-radius:50%;"></div><div class="abs" style="left:37.0px;top:7.0px;width:10.0px;height:8.0px;background:#c9c8a0;border-radius:50%;"></div><div class="abs" style="left:-1.0px;top:21.0px;width:34.0px;height:30.0px;background:#b9c6cf;border-radius:50%;"></div><div class="abs" style="left:2.0px;top:24.0px;width:28.0px;height:24.0px;background:#e9dfd5;border-radius:50%;"></div><div class="abs" style="left:7.0px;top:29.0px;width:12.0px;height:10.0px;background:#d0453f;border-radius:50%;"></div><div class="abs" style="left:17.0px;top:34.0px;width:10.0px;height:8.0px;background:#e8c7a0;border-radius:50%;"></div><div class="abs" style="left:12.0px;top:37.0px;width:8.0px;height:6.0px;background:#b93a44;border-radius:50%;"></div></div></div></div><div class="n" style="letter-spacing:0.25px">Coffee House</div><div class="s" style="letter-spacing:0.15px">Layout Pack</div></div>
<div class="card" style="left:779.6px;top:751.7px"><div class="img" style="background:#fff"><div class="abs" style="left:-0.6px;top:-1.7px;width:206px;height:155px"><div class="abs" style="left:-1.0px;top:-1.0px;width:209.0px;height:156.0px;background:#fff;"></div><div class="abs" style="left:-1.0px;top:-1.0px;width:209.0px;height:84.0px;background:#f2efeb;"></div><svg class="abs" style="left:0;top:0" width="206" height="83" viewBox="0 0 206 83"><ellipse cx="22" cy="20" rx="14" ry="6" fill="none" stroke="#e9e5df" stroke-width="1" transform="rotate(20 22 20)"/><ellipse cx="12" cy="40" rx="12" ry="5" fill="none" stroke="#e9e5df" stroke-width="1" transform="rotate(-15 12 40)"/><ellipse cx="44" cy="36" rx="10" ry="7" fill="none" stroke="#e9e5df" stroke-width="1" transform="rotate(30 44 36)"/><ellipse cx="158" cy="16" rx="12" ry="7" fill="none" stroke="#e9e5df" stroke-width="1" transform="rotate(-10 158 16)"/><ellipse cx="182" cy="36" rx="9" ry="16" fill="none" stroke="#e9e5df" stroke-width="1" transform="rotate(15 182 36)"/><ellipse cx="196" cy="60" rx="10" ry="6" fill="none" stroke="#e9e5df" stroke-width="1" transform="rotate(30 196 60)"/><ellipse cx="70" cy="14" rx="9" ry="5" fill="none" stroke="#e9e5df" stroke-width="1" transform="rotate(-20 70 14)"/><ellipse cx="190" cy="78" rx="8" ry="5" fill="none" stroke="#e9e5df" stroke-width="1" transform="rotate(10 190 78)"/></svg><div class="m" style="left:93.4px;top:25.3px;font-size:9.5px;line-height:11.4px;letter-spacing:0.00px;color:#2a2a2a;font-weight:bold;font-family:'Liberation Serif',serif;transform:scaleX(2.197);transform-origin:center center;">DIVI</div><div class="m" style="left:87.5px;top:35.5px;font-size:9.5px;line-height:11.4px;letter-spacing:0.00px;color:#2a2a2a;font-weight:bold;font-family:'Liberation Serif',serif;transform:scaleX(1.905);transform-origin:center center;">MEATS</div><div class="m" style="left:61.6px;top:49.5px;font-size:2.4px;line-height:2.9px;letter-spacing:-0.06px;color:#8a8580;overflow:hidden;width:84.7px">With the freshest cuts delivered daily our butchers take pride in every order and work</div><div class="m" style="left:62.0px;top:53.2px;font-size:2.4px;line-height:2.9px;letter-spacing:-0.07px;color:#8a8580;overflow:hidden;width:84px">With the freshest cuts delivered daily our butchers take pride in every order and work</div><div class="m" style="left:81.5px;top:56.9px;font-size:2.4px;line-height:2.9px;letter-spacing:-0.53px;color:#8a8580;overflow:hidden;width:45px">With the freshest cuts delivered daily our butchers take pride in every order and work</div><div class="abs" style="left:21.3px;top:72.7px;width:48.6px;height:48.3px;background:#fff;box-shadow:0 1.500px 5px rgba(60,50,40,.13)"></div><div class="abs" style="left:39.9px;top:76.7px;width:11.4px;height:11.4px;background:#0a0a0a;border-radius:50%;"></div><div class="abs" style="left:43.3px;top:80.1px;width:4.6px;height:4.6px;background:#fff;border-radius:50%;"></div><div class="m" style="left:33.1px;top:92.9px;font-size:2.6px;line-height:3.1px;letter-spacing:-0.15px;color:#222;font-weight:bold;">Monthly Subscriptions</div><div class="m" style="left:27.6px;top:99.1px;font-size:2.2px;line-height:2.6px;letter-spacing:-0.27px;color:#aaa;overflow:hidden;width:36px">Lorem ipsum dolor sit amet consectetur adipiscing</div><div class="m" style="left:34.6px;top:102.3px;font-size:2.2px;line-height:2.6px;letter-spacing:-0.56px;color:#aaa;overflow:hidden;width:22px">Lorem ipsum dolor sit amet consectetur adipiscing</div><div class="abs" style="left:35.8px;top:109.0px;width:19.6px;height:6.7px;background:#fff;border:.8px solid #e9a595;border-radius:3.400px"></div><div class="m" style="left:41.1px;top:111.2px;font-size:1.9px;line-height:2.3px;letter-spacing:-0.42px;color:#b5543f;font-weight:bold;">LEARN MORE</div><div class="abs" style="left:79.1px;top:72.7px;width:48.6px;height:48.3px;background:#fff;box-shadow:0 1.500px 5px rgba(60,50,40,.13)"></div><div class="abs" style="left:97.7px;top:76.7px;width:11.4px;height:11.4px;background:#0a0a0a;border-radius:50%;"></div><div class="abs" style="left:101.1px;top:80.1px;width:4.6px;height:4.6px;background:#fff;border-radius:50%;"></div><div class="m" style="left:94.9px;top:92.9px;font-size:2.6px;line-height:3.1px;letter-spacing:-0.09px;color:#222;font-weight:bold;">Direct Delivery</div><div class="m" style="left:85.4px;top:99.1px;font-size:2.2px;line-height:2.6px;letter-spacing:-0.27px;color:#aaa;overflow:hidden;width:36px">Lorem ipsum dolor sit amet consectetur adipiscing</div><div class="m" style="left:92.4px;top:102.3px;font-size:2.2px;line-height:2.6px;letter-spacing:-0.56px;color:#aaa;overflow:hidden;width:22px">Lorem ipsum dolor sit amet consectetur adipiscing</div><div class="abs" style="left:93.6px;top:109.0px;width:19.6px;height:6.7px;background:#fff;border:.8px solid #e9a595;border-radius:3.400px"></div><div class="m" style="left:98.9px;top:111.2px;font-size:1.9px;line-height:2.3px;letter-spacing:-0.42px;color:#b5543f;font-weight:bold;">LEARN MORE</div><div class="abs" style="left:137.1px;top:72.7px;width:48.6px;height:48.3px;background:#fff;box-shadow:0 1.500px 5px rgba(60,50,40,.13)"></div><div class="abs" style="left:155.7px;top:76.7px;width:11.4px;height:11.4px;background:#0a0a0a;border-radius:50%;"></div><div class="abs" style="left:159.1px;top:80.1px;width:4.6px;height:4.6px;background:#fff;border-radius:50%;"></div><div class="m" style="left:150.4px;top:92.9px;font-size:2.6px;line-height:3.1px;letter-spacing:-0.36px;color:#222;font-weight:bold;">Custom Meat Requests</div><div class="m" style="left:143.4px;top:99.1px;font-size:2.2px;line-height:2.6px;letter-spacing:-0.27px;color:#aaa;overflow:hidden;width:36px">Lorem ipsum dolor sit amet consectetur adipiscing</div><div class="m" style="left:150.4px;top:102.3px;font-size:2.2px;line-height:2.6px;letter-spacing:-0.56px;color:#aaa;overflow:hidden;width:22px">Lorem ipsum dolor sit amet consectetur adipiscing</div><div class="abs" style="left:151.6px;top:109.0px;width:19.6px;height:6.7px;background:#fff;border:.8px solid #e9a595;border-radius:3.400px"></div><div class="m" style="left:156.9px;top:111.2px;font-size:1.9px;line-height:2.3px;letter-spacing:-0.42px;color:#b5543f;font-weight:bold;">LEARN MORE</div><svg class="abs" style="left:0;top:135px" width="206" height="20" viewBox="0 135 206 20"><ellipse cx="22.5" cy="150" rx="9.500" ry="5" fill="none" stroke="#c9c9cc" stroke-width=".8"/><path d="M17.5 154v5M27.5 154v5M15.5 146l-3-4M29.5 146l3-4" stroke="#c9c9cc" stroke-width=".8" fill="none"/><ellipse cx="54.7" cy="150" rx="9.500" ry="5" fill="none" stroke="#c9c9cc" stroke-width=".8"/><path d="M49.7 154v5M59.7 154v5M47.7 146l-3-4M61.7 146l3-4" stroke="#c9c9cc" stroke-width=".8" fill="none"/><ellipse cx="87" cy="150" rx="9.500" ry="5" fill="none" stroke="#c9c9cc" stroke-width=".8"/><path d="M82 154v5M92 154v5M80 146l-3-4M94 146l3-4" stroke="#c9c9cc" stroke-width=".8" fill="none"/><ellipse cx="119" cy="150" rx="9.500" ry="5" fill="none" stroke="#c9c9cc" stroke-width=".8"/><path d="M114 154v5M124 154v5M112 146l-3-4M126 146l3-4" stroke="#c9c9cc" stroke-width=".8" fill="none"/><ellipse cx="151" cy="150" rx="9.500" ry="5" fill="none" stroke="#c9c9cc" stroke-width=".8"/><path d="M146 154v5M156 154v5M144 146l-3-4M158 146l3-4" stroke="#c9c9cc" stroke-width=".8" fill="none"/><ellipse cx="184" cy="150" rx="9.500" ry="5" fill="none" stroke="#c9c9cc" stroke-width=".8"/><path d="M179 154v5M189 154v5M177 146l-3-4M191 146l3-4" stroke="#c9c9cc" stroke-width=".8" fill="none"/></svg></div></div><div class="n" style="letter-spacing:0.22px">Butcher Shop</div><div class="s" style="letter-spacing:0.15px">Layout Pack</div></div>
<div class="card" style="left:1004.8px;top:751.7px"><div class="img" style="background:#fff"><div class="abs" style="left:-0.8px;top:-1.7px;width:206px;height:155px"><div class="abs" style="left:-1.0px;top:-1.0px;width:209.0px;height:156.0px;background:#fff;"></div><div class="m" style="left:21.0px;top:19.7px;font-size:2.2px;line-height:2.6px;letter-spacing:-0.13px;color:#666;">ONLINE COURSES</div><div class="m" style="left:21.0px;top:24.8px;font-size:6.7px;line-height:8px;letter-spacing:-0.27px;color:#26262a;font-weight:bold;">Learn Online</div><div class="m" style="left:21.0px;top:32.9px;font-size:6.7px;line-height:8px;letter-spacing:-0.24px;color:#26262a;font-weight:bold;">From The Best</div><div class="m" style="left:21.0px;top:41.0px;font-size:6.7px;line-height:8px;letter-spacing:-0.25px;color:#26262a;font-weight:bold;">In the Business</div><div class="abs" style="left:21.0px;top:55.0px;width:25.2px;height:7.2px;background:#0b0b0d;border-radius:3.600px"></div><div class="m" style="left:25.1px;top:57.4px;font-size:2.2px;line-height:2.6px;letter-spacing:-0.25px;color:#fff;font-weight:bold;">Browse the Courses</div><div class="abs" style="left:79.0px;top:12.3px;width:49.0px;height:75.7px;background:#fdb934;"></div><svg class="abs" style="left:70px;top:12px" width="70" height="80" viewBox="70 12 70 80"><path d="M103 36c2-8 8-13 14-10 3-4 9-3 11 3M104 36h24" fill="none" stroke="#fde3a8" stroke-width="1"/><path d="M80 70l3 12 3-12" fill="none" stroke="#fde3a8" stroke-width=".8"/><path d="M85 74c0-8 6-12 14-12 6 0 10 3 12 8l1 10-4 4-18 4c-4 0-5-6-5-14z" fill="#fff" stroke="#1d1d1f" stroke-width=".7"/><path d="M95 76l10 3 4 1" fill="none" stroke="#1d1d1f" stroke-width=".6"/><ellipse cx="100.400" cy="52.500" rx="4.600" ry="5.200" fill="#fff" stroke="#1d1d1f" stroke-width=".6"/><path d="M95.500 50c0-4 3-6 6-5.500 3 .5 4 2 4 4-3-1-6-1-8 .5z" fill="#111"/><path d="M96.500 54c1 0 6 0 8.500-1 1 4-.5 8-4 8.500-3 .5-4.500-3-4.500-7.500z" fill="#111"/><path d="M109.500 69.500l21-5.500 1.500 14-20.500 6z" fill="#fff" stroke="#4a4a4d" stroke-width=".7"/><circle cx="121" cy="74" r="2.600" fill="none" stroke="#555" stroke-width=".6"/></svg><div class="abs" style="left:137.0px;top:20.0px;width:49.0px;height:46.4px;background:#8b3dff;"></div><div class="abs" style="left:142.400px;top:36.400px;width:54.200px;height:30px;overflow:hidden;background:linear-gradient(90deg,#2e2a28 0%,#3a3532 25%,#6f6a66 45%,#a9a5a1 70%,#c4c0bc 100%)"><div class="abs" style="left:0.0px;top:6.0px;width:16.0px;height:24.0px;background:#1d1b1a;border-radius:6px 8px 0 0"></div><div class="abs" style="left:2.0px;top:0.0px;width:10.0px;height:9.0px;background:#3a2e28;border-radius:5px"></div><div class="abs" style="left:13.0px;top:5.0px;width:8.0px;height:6.0px;background:#e0a13a;"></div><div class="abs" style="left:20.0px;top:9.0px;width:21.0px;height:18.0px;background:#22262a;transform:skewX(-8deg)"></div><div class="abs" style="left:24.4px;top:13.4px;width:5.2px;height:5.2px;background:transparent;border-radius:50%;border:.6px solid #ddd"></div><div class="abs" style="left:40.0px;top:22.0px;width:14.0px;height:8.0px;background:#7a5a48;border-radius:4px"></div></div><div class="abs" style="left:21.0px;top:109.0px;width:7.6px;height:7.6px;background:#fff;border:.8px solid #d957c7;border-radius:1px"></div><div class="abs" style="left:24.0px;top:112.0px;width:4.6px;height:4.2px;background:#2bbf8a;opacity:.9"></div><div class="m" style="left:21.0px;top:120.2px;font-size:2.9px;line-height:3.5px;letter-spacing:0.05px;color:#26262a;font-weight:bold;">Self-Guided Courses</div><div class="m" style="left:21.0px;top:126.3px;font-size:2.3px;line-height:2.8px;letter-spacing:-0.39px;color:#d9a3b8;overflow:hidden;width:45px">Lorem ipsum dolor sit amet consectetur adipiscing elit sed do eiusmod</div><div class="m" style="left:21.0px;top:130.0px;font-size:2.3px;line-height:2.8px;letter-spacing:-0.51px;color:#d9a3b8;overflow:hidden;width:37px">Lorem ipsum dolor sit amet consectetur adipiscing elit sed do eiusmod</div><div class="abs" style="left:22.0px;top:140.0px;width:6.6px;height:7.6px;background:#fff;border:.8px solid #8b3dff;border-radius:1px"></div><div class="abs" style="left:24.5px;top:144.0px;width:4.0px;height:3.6px;background:#f5a623;opacity:.9"></div><div class="m" style="left:21.0px;top:151.2px;font-size:2.9px;line-height:3.5px;letter-spacing:0.05px;color:#26262a;font-weight:bold;">Access On The Go</div><div class="abs" style="left:79.0px;top:109.0px;width:7.6px;height:7.6px;background:#fff;border:.8px solid #2d2f8f;border-radius:1px"></div><div class="abs" style="left:82.0px;top:112.0px;width:4.6px;height:4.2px;background:#2d2f8f;opacity:.9"></div><div class="m" style="left:79.0px;top:120.2px;font-size:2.9px;line-height:3.5px;letter-spacing:0.05px;color:#26262a;font-weight:bold;">Learn In Any Language</div><div class="m" style="left:79.0px;top:126.3px;font-size:2.3px;line-height:2.8px;letter-spacing:-0.39px;color:#9db3cf;overflow:hidden;width:45px">Lorem ipsum dolor sit amet consectetur adipiscing elit sed do eiusmod</div><div class="m" style="left:79.0px;top:130.0px;font-size:2.3px;line-height:2.8px;letter-spacing:-0.51px;color:#9db3cf;overflow:hidden;width:37px">Lorem ipsum dolor sit amet consectetur adipiscing elit sed do eiusmod</div><div class="abs" style="left:80.0px;top:140.0px;width:6.6px;height:7.6px;background:#fff;border:.8px solid #f5a623;border-radius:1px"></div><div class="abs" style="left:82.5px;top:144.0px;width:4.0px;height:3.6px;background:#f5a623;opacity:.9"></div><div class="m" style="left:79.0px;top:151.2px;font-size:2.9px;line-height:3.5px;letter-spacing:0.06px;color:#26262a;font-weight:bold;">Goals &amp; Achievements</div><div class="abs" style="left:137.0px;top:109.0px;width:7.6px;height:7.6px;background:#fff;border:.8px solid #8b3dff;border-radius:1px"></div><div class="abs" style="left:140.0px;top:112.0px;width:4.6px;height:4.2px;background:#d957c7;opacity:.9"></div><div class="m" style="left:137.0px;top:120.2px;font-size:2.9px;line-height:3.5px;letter-spacing:0.07px;color:#26262a;font-weight:bold;">Virtual Office Hours</div><div class="m" style="left:137.0px;top:126.3px;font-size:2.3px;line-height:2.8px;letter-spacing:-0.39px;color:#b9b9c9;overflow:hidden;width:45px">Lorem ipsum dolor sit amet consectetur adipiscing elit sed do eiusmod</div><div class="m" style="left:137.0px;top:130.0px;font-size:2.3px;line-height:2.8px;letter-spacing:-0.51px;color:#b9b9c9;overflow:hidden;width:37px">Lorem ipsum dolor sit amet consectetur adipiscing elit sed do eiusmod</div><div class="abs" style="left:138.0px;top:140.0px;width:6.6px;height:7.6px;background:#fff;border:.8px solid #d94a5a;border-radius:1px"></div><div class="abs" style="left:140.5px;top:144.0px;width:4.0px;height:3.6px;background:#2bbf8a;opacity:.9"></div><div class="m" style="left:137.0px;top:151.2px;font-size:2.9px;line-height:3.5px;letter-spacing:0.11px;color:#26262a;font-weight:bold;">Homework &amp; Tests</div></div></div><div class="n" style="letter-spacing:0.17px">Online Learning</div><div class="s" style="letter-spacing:0.15px">Layout Pack</div></div>
<div class="card" style="left:1230.0px;top:751.7px"><div class="img" style="background:#fff"><div class="abs" style="left:-1.0px;top:-1.7px;width:206px;height:155px"><div class="abs" style="left:-1.0px;top:-1.0px;width:209.0px;height:156.0px;background:#fff;"></div><div class="abs" style="left:9.7px;top:10.5px;width:188.0px;height:114.5px;background:#faf6f3;"></div><div class="abs" style="left:68.600px;top:24px;width:70px;height:81.600px;border-radius:35px 35px 0 0;background:linear-gradient(180deg,#d5d6da 0%,#dcdadc 30%,#ecdcd6 62%,#f1dfd6 100%)"></div><div class="m" style="left:22.5px;top:48.9px;font-size:3.6px;line-height:4.3px;letter-spacing:0.08px;color:#555;font-family:'Liberation Serif',serif;">Fashion Designer</div><div class="m" style="left:21.7px;top:52.3px;font-size:25.5px;line-height:30.6px;letter-spacing:0.00px;color:#2a2a28;font-family:'Liberation Serif',serif;transform:scaleX(0.950);transform-origin:left center;">JENNY SMITH</div><div class="abs" style="left:68.600px;top:24px;width:70px;height:81.600px;overflow:hidden;border-radius:35px 35px 0 0"><div class="abs" style="left:20.0px;top:32.0px;width:32.0px;height:52.0px;background:linear-gradient(100deg,#9a4f16 0%,#b8661f 45%,#a85a1a 100%);border-radius:12px 10px 0 0;transform:rotate(3deg)"></div><div class="abs" style="left:15.0px;top:36.0px;width:13.0px;height:26.0px;background:#a85a1a;border-radius:8px;transform:rotate(24deg)"></div><div class="abs" style="left:32.0px;top:22.0px;width:11.0px;height:18.0px;background:#ead6b8;border-radius:5px;transform:rotate(12deg)"></div><div class="abs" style="left:35.0px;top:18.0px;width:10.0px;height:12.0px;background:#dcae92;border-radius:50%;"></div><div class="abs" style="left:28.0px;top:6.0px;width:32.0px;height:24.0px;background:#4a3b37;border-radius:50%;"></div><div class="abs" style="left:32.0px;top:3.5px;width:20.0px;height:17.0px;background:#3a2e2b;border-radius:50%;"></div><div class="abs" style="left:27.0px;top:16.0px;width:9.0px;height:12.0px;background:linear-gradient(180deg,#5a4a45,#8a7a72);border-radius:6px;opacity:.85"></div></div><div class="m" style="left:162.6px;top:81.0px;font-size:2.3px;line-height:2.8px;letter-spacing:-0.13px;color:#222;font-weight:bold;">Based in Los Angeles</div><div class="abs" style="left:170.0px;top:90.0px;width:14.0px;height:6.0px;background:#050505;"></div><div class="m" style="left:173.5px;top:91.9px;font-size:2px;line-height:2.4px;letter-spacing:-0.22px;color:#fff;font-weight:bold;">HIRE ME</div><div class="abs" style="left:34.0px;top:145.0px;width:32.0px;height:10.0px;background:linear-gradient(180deg,#eee3db,#e3d6cc);"></div><div class="abs" style="left:42.0px;top:152.0px;width:12.0px;height:8.0px;background:#cfc6be;border-radius:50%;"></div><div class="abs" style="left:93.0px;top:145.0px;width:80.0px;height:10.0px;background:linear-gradient(90deg,#d7b9a6 0%,#e9dcd4 22%,#f3eeea 40%,#e8dfd9 60%,#e3c4b0 82%,#d9b49c 100%);"></div></div></div><div class="n" style="letter-spacing:0.24px">Clothing Designer</div><div class="s" style="letter-spacing:0.15px">Layout Pack</div></div>
<div class="card" style="left:329.2px;top:1002.1px"><div class="img"><div class="abs" style="left:-1.0px;top:-1.0px;width:209.0px;height:156.0px;background:#0a0a0a;"></div></div></div>
<div class="card" style="left:554.4px;top:1002.1px"><div class="img"><div class="abs" style="left:-1.0px;top:-1.0px;width:209.0px;height:156.0px;background:#fff;"></div></div></div>
<div class="card" style="left:779.6px;top:1002.1px"><div class="img"><div class="abs" style="left:-1.0px;top:-1.0px;width:209.0px;height:156.0px;background:#e9e9ee;"></div></div></div>
<div class="card" style="left:1004.8px;top:1002.1px"><div class="img"><div class="abs" style="left:-1.0px;top:-1.0px;width:209.0px;height:156.0px;background:linear-gradient(90deg,#2d2b2a,#4a4745 40%,#6b6865 60%,#2f2d2c);"></div></div></div>
<div class="card" style="left:1230.0px;top:1002.1px"><div class="img"><div class="abs" style="left:-1.0px;top:-1.0px;width:209.0px;height:156.0px;background:#fff;"></div><div class="abs" style="left:120.0px;top:1.0px;width:60.0px;height:5.0px;background:#dcd8f2;border-radius:3px;opacity:.7"></div></div></div>
<!--ENDGRID-->
</div>
<!--HILITE-->
<div class="abs" style="left:990.500px;top:736px;width:236px;height:258.500px;border:10px solid #ee5355;border-radius:8px"></div>
<!--RIGHT-->

<div id="right"></div>
<div class="t" style="left:1528.8px;top:66.3px;font-size:13px;letter-spacing:0.15px;-webkit-text-stroke:0.6px currentColor;">Page Settings</div>
<svg class="abs" style="left:1776px;top:66px" width="13" height="13" viewBox="0 0 13 13"><path d="M1.800 1.800l9.400 9.400M11.200 1.800l-9.400 9.400" stroke="#1d2028" stroke-width="2" fill="none"/></svg>
<div class="t" style="left:1529.9px;top:99.8px;font-size:13px;letter-spacing:0.35px;color:#2c60e4;">Content</div>
<div class="t" style="left:1598.9px;top:99.8px;font-size:13px;letter-spacing:0.27px;color:#4c5a8c;">Design</div>
<div class="t" style="left:1662.4px;top:99.8px;font-size:13px;letter-spacing:0.40px;color:#4c5a8c;">Advanced</div>
<div class="abs" style="left:1512px;top:129px;width:288px;height:1px;background:#e1e4ea"></div>
<div class="abs" style="left:1519px;top:127px;width:69.500px;height:3px;background:#2c60e4"></div>
<div class="abs" style="left:1528px;top:149.300px;width:0;height:0;border-left:4.200px solid transparent;border-right:4.200px solid transparent;border-top:5.600px solid #2c60e4"></div>
<div class="t" style="left:1545.5px;top:144.9px;font-size:13px;letter-spacing:-0.36px;color:#2c60e4;font-weight:bold;-webkit-text-stroke:0;font-size:13.500px">Page</div>
<div class="abs" style="left:1528.500px;top:176px;width:259px;height:29px;border:1px solid #dde0e7;border-radius:3px;background:#fff"></div>
<div class="abs" style="left:1572.700px;top:181.200px;width:18.500px;height:18.500px;border-radius:3.500px;background:linear-gradient(160deg,#38c0f2 0%,#3d7df0 45%,#5a2fe6 100%)"></div>
<div class="t" style="left:1577.5px;top:182.6px;font-size:9.5px;letter-spacing:-0.50px;color:#fff;font-weight:bold;-webkit-text-stroke:0;">AI</div>
<div class="t" style="left:1596.5px;top:182.6px;font-size:13px;letter-spacing:0.18px;">Generate Content With AI</div>
<div class="t" style="left:1528.0px;top:223.8px;font-size:13px;letter-spacing:0.24px;color:#566083;-webkit-text-stroke:0.25px currentColor;">Page Title</div>
<div class="abs" style="left:1528.500px;top:250px;width:259px;height:29.500px;border:1px solid #dde0e7;border-radius:3px;background:#fff"></div>
<div class="t" style="left:1540.0px;top:256.9px;font-size:13px;letter-spacing:0.23px;">Build A Pop-Up With Divi 5</div>
<div class="t" style="left:1528.0px;top:298.2px;font-size:13px;letter-spacing:0.32px;color:#566083;-webkit-text-stroke:0.25px currentColor;">Excerpt</div>
<div class="abs" style="left:1528.500px;top:324px;width:259px;height:126px;border:1px solid #dde0e7;border-radius:3px;background:#fff"></div>
<svg class="abs" style="left:1776px;top:438px" width="10" height="10" viewBox="0 0 10 10"><path d="M9 2L2 9M9 6L6 9" stroke="#555" stroke-width="1" fill="none"/></svg>
<div class="t" style="left:1528.0px;top:468.5px;font-size:13px;letter-spacing:0.09px;color:#566083;-webkit-text-stroke:0.25px currentColor;">Featured Image</div>
<div class="abs" style="left:1528.500px;top:495px;width:259px;height:166.500px;border:1px solid #dde0e7;border-radius:3px;background:#fff"></div>
<div class="abs" style="left:1617.500px;top:583px;width:9px;height:1.200px;background:#7a84a8"></div><div class="abs" style="left:1621.400px;top:579px;width:1.200px;height:9px;background:#7a84a8"></div>
<div class="t" style="left:1637.5px;top:575.5px;font-size:13px;letter-spacing:0.14px;color:#566083;-webkit-text-stroke:0.25px currentColor;">Add Image</div>
<div class="abs" style="left:1512px;top:678.500px;width:288px;height:1px;background:#e1e4ea"></div>
<div class="abs" style="left:1528.600px;top:697.500px;width:0;height:0;border-top:4.200px solid transparent;border-bottom:4.200px solid transparent;border-left:5.600px solid #1d2028"></div>
<div class="t" style="left:1545.5px;top:693.9px;font-size:13px;letter-spacing:-0.43px;font-weight:bold;-webkit-text-stroke:0;font-size:13px">Background</div>
<div class="abs" style="left:1512px;top:726.200px;width:288px;height:1px;background:#e1e4ea"></div>
<div class="abs" style="left:1530.400px;top:746.300px;width:16.400px;height:16.400px;border-radius:9px;background:#9ba4c2"></div>
<div class="t" style="left:1535.0px;top:746.6px;font-size:12px;letter-spacing:0.00px;color:#fff;font-weight:bold;-webkit-text-stroke:0;">?</div>
<div class="abs" style="left:1796.500px;top:1038px;width:8px;height:8px;background:#27313d;border-radius:4px 0 0 0"></div>
<div class="abs" style="left:-4px;top:1038.500px;width:7px;height:7px;background:#27313d;border-radius:0 4px 0 0"></div>
</body>
</html>
